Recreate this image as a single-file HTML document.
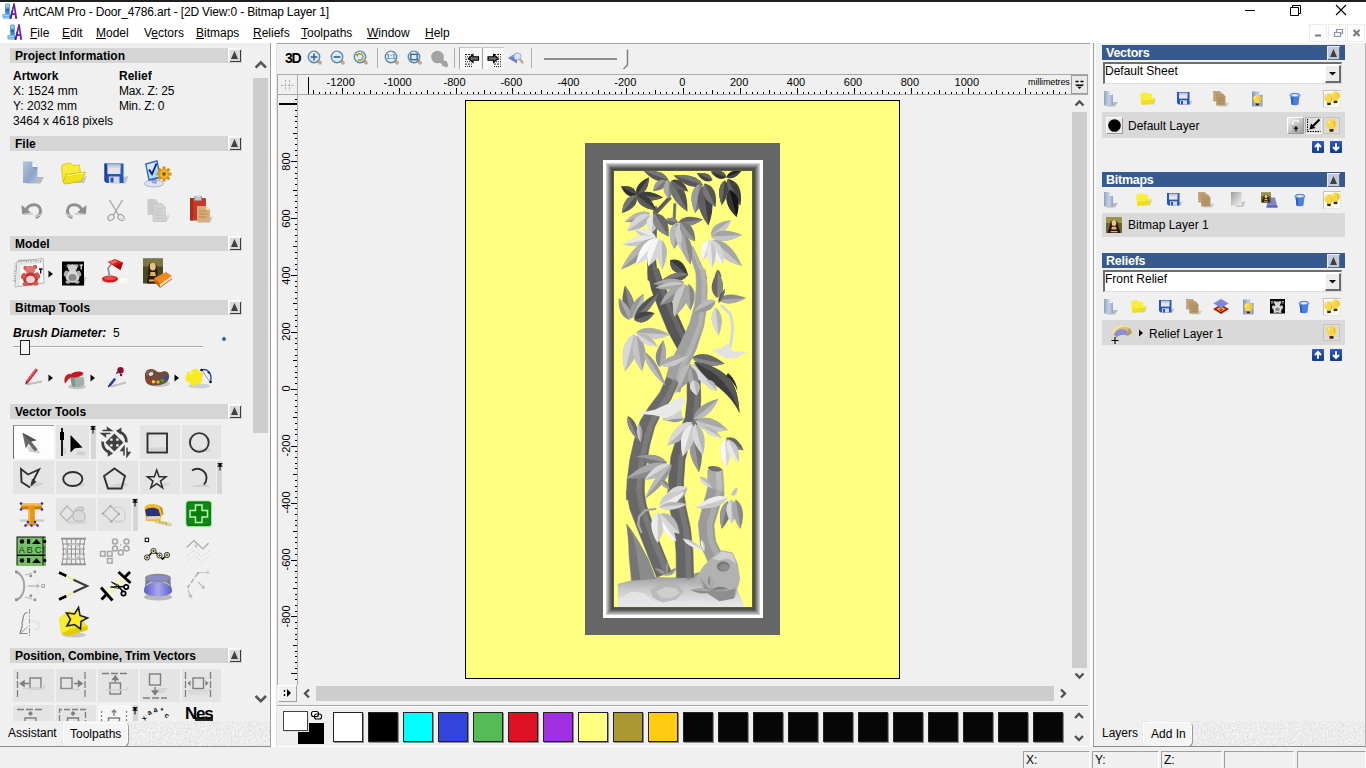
<!DOCTYPE html>
<html lang="en"><head><meta charset="utf-8"><title>ArtCAM Pro - Door_4786.art</title>
<style>
html,body{margin:0;padding:0;}
body{width:1366px;height:768px;overflow:hidden;background:#f0f0f0;position:relative;font-family:"Liberation Sans",sans-serif;}
.t{position:absolute;white-space:pre;line-height:1;}
.r{position:absolute;}
svg{position:absolute;overflow:visible;}
u{text-decoration:underline;text-underline-offset:1px;}
</style></head>
<body>
<div class="r" style="left:0px;top:0px;width:1366px;height:2px;background:#1f1f1f;"></div>
<div class="r" style="left:0px;top:2px;width:1366px;height:41px;background:#ffffff;"></div>
<svg style="left:2px;top:3px" width="16" height="16" viewBox="0 0 16 16"><path d="M3.2 1.6 C3.2 0 7.8 0 7.8 1.6 V11 H3.2 Z" fill="#3f8fd8"/><path d="M3.8 1.8 C4.2 0.8 6.6 0.8 7 1.8 V4.5 H3.8 Z" fill="#8fd0e8"/><rect x="3.6" y="6" width="3.4" height="2.4" fill="#2a66c0"/><path d="M0.3 11.2 H8.2 V15.6 H0.8 Z" fill="#4a9ee0"/><path d="M1.2 12.6 H7 M1.2 14.2 H7" stroke="#d8ecf8" stroke-width=".7"/><path d="M7.6 15.8 L11.6 0.2 H12.8 L15.2 15.8 H13.2 L12.8 12 H10.4 L9.6 15.8 Z" fill="#7a1a9e"/><path d="M10.8 10.2 H12.6 L11.9 4.4 Z" fill="#fff"/><path d="M7.6 15.8 L11.6 0.2 L12 0.2 L9 15.8 Z" fill="#2a2a90"/></svg>
<span class="t" style="left:23px;top:6.00px;font-size:12px;font-weight:400;color:#000;font-style:normal;letter-spacing:-0.15px;">ArtCAM Pro - Door_4786.art - [2D View:0 - Bitmap Layer 1]</span>
<svg style="left:1240px;top:2px" width="126" height="20" viewBox="0 0 126 20"><path d="M5 8.5 H15" stroke="#000" stroke-width="1" fill="none"/><path d="M50.5 5.5 H58.5 V13.5 H50.5 Z M52.5 5.5 V3.5 H60.5 V11.5 H58.5" stroke="#000" stroke-width="1" fill="none"/><path d="M96 3 L106 13 M106 3 L96 13" stroke="#000" stroke-width="1.1" fill="none"/></svg>
<svg style="left:7px;top:24px" width="16" height="16" viewBox="0 0 16 16"><path d="M3.2 1.6 C3.2 0 7.8 0 7.8 1.6 V11 H3.2 Z" fill="#3f8fd8"/><path d="M3.8 1.8 C4.2 0.8 6.6 0.8 7 1.8 V4.5 H3.8 Z" fill="#8fd0e8"/><rect x="3.6" y="6" width="3.4" height="2.4" fill="#2a66c0"/><path d="M0.3 11.2 H8.2 V15.6 H0.8 Z" fill="#4a9ee0"/><path d="M1.2 12.6 H7 M1.2 14.2 H7" stroke="#d8ecf8" stroke-width=".7"/><path d="M7.6 15.8 L11.6 0.2 H12.8 L15.2 15.8 H13.2 L12.8 12 H10.4 L9.6 15.8 Z" fill="#7a1a9e"/><path d="M10.8 10.2 H12.6 L11.9 4.4 Z" fill="#fff"/><path d="M7.6 15.8 L11.6 0.2 L12 0.2 L9 15.8 Z" fill="#2a2a90"/></svg>
<span class="t" style="left:30px;top:27.00px;font-size:12px;font-weight:400;color:#000;font-style:normal;"><u>F</u>ile</span>
<span class="t" style="left:62px;top:27.00px;font-size:12px;font-weight:400;color:#000;font-style:normal;"><u>E</u>dit</span>
<span class="t" style="left:96px;top:27.00px;font-size:12px;font-weight:400;color:#000;font-style:normal;"><u>M</u>odel</span>
<span class="t" style="left:144px;top:27.00px;font-size:12px;font-weight:400;color:#000;font-style:normal;">V<u>e</u>ctors</span>
<span class="t" style="left:196px;top:27.00px;font-size:12px;font-weight:400;color:#000;font-style:normal;"><u>B</u>itmaps</span>
<span class="t" style="left:253px;top:27.00px;font-size:12px;font-weight:400;color:#000;font-style:normal;"><u>R</u>eliefs</span>
<span class="t" style="left:301px;top:27.00px;font-size:12px;font-weight:400;color:#000;font-style:normal;"><u>T</u>oolpaths</span>
<span class="t" style="left:367px;top:27.00px;font-size:12px;font-weight:400;color:#000;font-style:normal;"><u>W</u>indow</span>
<span class="t" style="left:425px;top:27.00px;font-size:12px;font-weight:400;color:#000;font-style:normal;"><u>H</u>elp</span>
<svg style="left:1308px;top:23px" width="58" height="20" viewBox="0 0 58 20"><rect x="1.5" y="1.5" width="17" height="17" fill="#fdfdfd" stroke="#ececec"/><rect x="20.5" y="1.5" width="17" height="17" fill="#fdfdfd" stroke="#ececec"/><rect x="39.5" y="1.5" width="17" height="17" fill="#fdfdfd" stroke="#ececec"/><path d="M7 12.5 H13" stroke="#7a7a7a" stroke-width="2"/><path d="M26.5 9.5 H32.5 V13.5 H26.5 Z M28.5 9 V6.5 H34.5 V10.5 H33" stroke="#8a93a6" stroke-width="1.2" fill="none"/><path d="M45.5 7 L51.5 13 M51.5 7 L45.5 13" stroke="#7a7a7a" stroke-width="2"/></svg>
<div class="r" style="left:0px;top:43px;width:1366px;height:705px;background:#f0f0f0;"></div>
<div class="r" style="left:270px;top:43px;width:1px;height:705px;background:#a0a0a0;"></div>
<div class="r" style="left:271px;top:43px;width:5px;height:705px;background:#ffffff;"></div>
<div class="r" style="left:276px;top:43px;width:1px;height:705px;background:#e3e3e3;"></div>
<div class="r" style="left:1088px;top:43px;width:2px;height:705px;background:#f0f0f0;"></div>
<div class="r" style="left:1090px;top:43px;width:3px;height:705px;background:#fbfbfb;"></div>
<div class="r" style="left:1094px;top:43px;width:2px;height:678px;background:#f8f8f8;"></div>
<div class="r" style="left:1093px;top:43px;width:1px;height:705px;background:#a0a0a0;"></div>
<div class="r" style="left:10px;top:48px;width:232px;height:15px;background:#d5d5d5;"></div>
<span class="t" style="left:15px;top:50.00px;font-size:12px;font-weight:700;color:#000;font-style:normal;">Project Information</span>
<div class="r" style="left:228px;top:48px;width:13px;height:14px;background:#dadada;box-shadow:inset 1px 1px 0 #fff, inset 2px 2px 0 #f2f2f2, inset -1px -1px 0 #3c3c3c;"></div><svg style="left:228px;top:48px" width="13" height="14" viewBox="0 0 13 14"><path d="M6.5 3 L10 11 L3 11 Z" fill="#404040"/></svg>
<div class="r" style="left:10px;top:136px;width:232px;height:15px;background:#d5d5d5;"></div>
<span class="t" style="left:15px;top:138.00px;font-size:12px;font-weight:700;color:#000;font-style:normal;">File</span>
<div class="r" style="left:228px;top:136px;width:13px;height:14px;background:#dadada;box-shadow:inset 1px 1px 0 #fff, inset 2px 2px 0 #f2f2f2, inset -1px -1px 0 #3c3c3c;"></div><svg style="left:228px;top:136px" width="13" height="14" viewBox="0 0 13 14"><path d="M6.5 3 L10 11 L3 11 Z" fill="#404040"/></svg>
<div class="r" style="left:10px;top:236px;width:232px;height:15px;background:#d5d5d5;"></div>
<span class="t" style="left:15px;top:238.00px;font-size:12px;font-weight:700;color:#000;font-style:normal;">Model</span>
<div class="r" style="left:228px;top:236px;width:13px;height:14px;background:#dadada;box-shadow:inset 1px 1px 0 #fff, inset 2px 2px 0 #f2f2f2, inset -1px -1px 0 #3c3c3c;"></div><svg style="left:228px;top:236px" width="13" height="14" viewBox="0 0 13 14"><path d="M6.5 3 L10 11 L3 11 Z" fill="#404040"/></svg>
<div class="r" style="left:10px;top:300px;width:232px;height:15px;background:#d5d5d5;"></div>
<span class="t" style="left:15px;top:302.00px;font-size:12px;font-weight:700;color:#000;font-style:normal;">Bitmap Tools</span>
<div class="r" style="left:228px;top:300px;width:13px;height:14px;background:#dadada;box-shadow:inset 1px 1px 0 #fff, inset 2px 2px 0 #f2f2f2, inset -1px -1px 0 #3c3c3c;"></div><svg style="left:228px;top:300px" width="13" height="14" viewBox="0 0 13 14"><path d="M6.5 3 L10 11 L3 11 Z" fill="#404040"/></svg>
<div class="r" style="left:10px;top:404px;width:232px;height:15px;background:#d5d5d5;"></div>
<span class="t" style="left:15px;top:406.00px;font-size:12px;font-weight:700;color:#000;font-style:normal;">Vector Tools</span>
<div class="r" style="left:228px;top:404px;width:13px;height:14px;background:#dadada;box-shadow:inset 1px 1px 0 #fff, inset 2px 2px 0 #f2f2f2, inset -1px -1px 0 #3c3c3c;"></div><svg style="left:228px;top:404px" width="13" height="14" viewBox="0 0 13 14"><path d="M6.5 3 L10 11 L3 11 Z" fill="#404040"/></svg>
<div class="r" style="left:10px;top:648px;width:232px;height:15px;background:#d5d5d5;"></div>
<span class="t" style="left:15px;top:650.00px;font-size:12px;font-weight:700;color:#000;font-style:normal;letter-spacing:-0.1px;">Position, Combine, Trim Vectors</span>
<div class="r" style="left:228px;top:648px;width:13px;height:14px;background:#dadada;box-shadow:inset 1px 1px 0 #fff, inset 2px 2px 0 #f2f2f2, inset -1px -1px 0 #3c3c3c;"></div><svg style="left:228px;top:648px" width="13" height="14" viewBox="0 0 13 14"><path d="M6.5 3 L10 11 L3 11 Z" fill="#404040"/></svg>
<span class="t" style="left:13px;top:70.00px;font-size:12px;font-weight:700;color:#000;font-style:normal;">Artwork</span>
<span class="t" style="left:119px;top:70.00px;font-size:12px;font-weight:700;color:#000;font-style:normal;">Relief</span>
<span class="t" style="left:13px;top:85.00px;font-size:12px;font-weight:400;color:#000;font-style:normal;">X: 1524 mm</span>
<span class="t" style="left:119px;top:85.00px;font-size:12px;font-weight:400;color:#000;font-style:normal;letter-spacing:-0.15px;">Max. Z: 25</span>
<span class="t" style="left:13px;top:100.00px;font-size:12px;font-weight:400;color:#000;font-style:normal;">Y: 2032 mm</span>
<span class="t" style="left:119px;top:100.00px;font-size:12px;font-weight:400;color:#000;font-style:normal;letter-spacing:-0.15px;">Min. Z: 0</span>
<span class="t" style="left:13px;top:115.00px;font-size:12px;font-weight:400;color:#000;font-style:normal;">3464 x 4618 pixels</span>
<span class="t" style="left:13px;top:327.00px;font-size:12px;font-weight:700;color:#000;font-style:italic;">Brush Diameter:</span>
<span class="t" style="left:113px;top:327.00px;font-size:12px;font-weight:400;color:#000;font-style:normal;">5</span>
<div class="r" style="left:13px;top:346px;width:190px;height:1px;background:#a8a8a8;"></div>
<div class="r" style="left:13px;top:347px;width:190px;height:1px;background:#ffffff;"></div>
<div class="r" style="left:20px;top:340px;width:10px;height:15px;background:#f4f4f4;box-sizing:border-box;border:1px solid #222;"></div>
<svg style="left:221px;top:336px" width="6" height="6" viewBox="0 0 6 6"><path d="M3 0.5 L5.5 3 L3 5.5 L0.5 3 Z" fill="#3d6a8c"/></svg>
<svg style="left:21px;top:160px" width="24" height="26" viewBox="0 0 24 26"><defs><linearGradient id="gdoc" x1="0" y1="0" x2="1" y2="1"><stop offset="0" stop-color="#b9c6dc"/><stop offset=".6" stop-color="#8ea5c6"/><stop offset="1" stop-color="#b6c4dc"/></linearGradient></defs><path d="M15 17 L23 17 L19.5 23.5 H5 Z" fill="#b9b9b9"/><path d="M2 1.5 H11.5 L16.5 7 V23 H2 Z" fill="url(#gdoc)"/><path d="M11.5 1.5 L16.5 7 H11.5 Z" fill="#fff"/><path d="M11.5 7 H16.5 L14.5 9.5 Z" fill="#7d93b5"/></svg>
<svg style="left:60px;top:161px" width="28" height="24" viewBox="0 0 28 24"><path d="M20 19 L27 14.5 L24 22 H8 Z" fill="#c4c4c4"/><path d="M1.5 6 L3 3.5 L10.5 2 L13 4.5 L19.5 4 L20.5 13 L3 21 Z" fill="#f7ec3a" stroke="#d6c400" stroke-width=".8"/><path d="M3 21.5 L6 13.5 L25.5 11 L21.5 20 L6 23 Z" fill="#f2e21c" stroke="#c9b600" stroke-width=".8"/><path d="M6.5 14.5 L24 12" stroke="#fdf68a" stroke-width="1"/></svg>
<svg style="left:103px;top:162px" width="26" height="23" viewBox="0 0 26 23"><path d="M20 15 L25.5 14 L22.5 21.5 H8 Z" fill="#c2c2c2"/><path d="M1.5 1.5 H20.5 V21 H3.5 L1.5 19 Z" fill="#2457bd"/><path d="M1.5 1.5 H3.5 V21 L1.5 19 Z" fill="#163f98"/><rect x="4.5" y="2.5" width="13" height="9.5" fill="#e4e4e8"/><rect x="4.5" y="2.5" width="13" height="3" fill="#c6c8d2"/><rect x="6" y="14.5" width="10.5" height="6.5" fill="#d7d9df"/><rect x="7.5" y="15.5" width="3" height="5" fill="#2457bd"/></svg>
<svg style="left:142px;top:159px" width="31" height="29" viewBox="0 0 31 29"><ellipse cx="12" cy="24.5" rx="9.5" ry="3.4" fill="#dfe3f4" stroke="#9aa4cc" stroke-width=".8"/><path d="M10 19 L15 20 L14.5 25 L9.5 24 Z" fill="#9aa4d8"/><path d="M3 4.5 L15.5 1 L19 19 L6.5 22 Z" fill="#3d5cc0"/><path d="M4.5 5.5 L14.5 2.8 L17.5 17.5 L7.5 20 Z" fill="#a9dcf5"/><path d="M5 6 L14 3.5 L15 9 L6.2 12 Z" fill="#d2eefb"/><path d="M7 10.5 L10 15 L14.5 4.5" stroke="#101880" stroke-width="1.8" fill="none"/><g transform="translate(22,15)"><circle r="5.2" fill="#e8a21c"/><path d="M-1.5 -7.5 H1.5 V7.5 H-1.5 Z M-7.5 -1.5 H7.5 V1.5 H-7.5 Z" fill="#d98f10"/><path d="M-1.5 -7.5 H1.5 V7.5 H-1.5 Z M-7.5 -1.5 H7.5 V1.5 H-7.5 Z" fill="#d98f10" transform="rotate(45)"/><circle r="4.4" fill="#efb02a"/><circle r="1.8" fill="#7a5208"/></g></svg>
<svg style="left:20px;top:200px" width="26" height="22" viewBox="0 0 26 22"><path d="M3 14 H13" stroke="#cfcfcf" stroke-width="2"/><path d="M6 10.5 C8 3 20 2.5 20.5 10.5 C20.7 14 18.5 16.5 15.5 17.5" stroke="#8e8e8e" stroke-width="3" fill="none"/><path d="M1.5 5 L2 14 L11 12.5 Z" fill="#8e8e8e"/><path d="M15 17 L23 13.5" stroke="#cfcfcf" stroke-width="1.5"/></svg>
<svg style="left:62px;top:200px" width="26" height="22" viewBox="0 0 26 22"><path d="M13 14 H23" stroke="#cfcfcf" stroke-width="2"/><path d="M20 10.5 C18 3 6 2.5 5.5 10.5 C5.3 14 7.5 16.5 10.5 17.5" stroke="#8e8e8e" stroke-width="3" fill="none"/><path d="M24.5 5 L24 14 L15 12.5 Z" fill="#8e8e8e"/><path d="M3 13.5 L11 17" stroke="#cfcfcf" stroke-width="1.5"/></svg>
<svg style="left:105px;top:198px" width="22" height="25" viewBox="0 0 22 25"><path d="M4.5 2 L13.5 17 M17.5 2 L8.5 17" stroke="#a2a2a2" stroke-width="1.3" fill="none"/><ellipse cx="6" cy="19.5" rx="3.3" ry="2.6" fill="none" stroke="#a2a2a2" stroke-width="1.2" transform="rotate(-35 6 19.5)"/><ellipse cx="16" cy="19.5" rx="3.3" ry="2.6" fill="none" stroke="#a2a2a2" stroke-width="1.2" transform="rotate(35 16 19.5)"/><path d="M15 20 L21 22" stroke="#d6d6d6" stroke-width="1.5"/></svg>
<svg style="left:146px;top:198px" width="25" height="26" viewBox="0 0 25 26"><path d="M18 18 L24 17 L21 24 H9 Z" fill="#d6d6d6"/><path d="M1.5 1 H9.5 L12 4 V17 H1.5 Z" fill="#cbcbcb"/><path d="M7 5.5 H16 L19.5 9.5 V23.5 H7 Z" fill="#d2d2d2" stroke="#c0c0c0" stroke-width=".6"/><path d="M9 11 H17 M9 14 H17 M9 17 H17 M9 20 H17" stroke="#c6c6c6" stroke-width="1"/></svg>
<svg style="left:188px;top:194px" width="26" height="30" viewBox="0 0 26 30"><path d="M17 24 L25 22.5 L22 29 H9 Z" fill="#cdcdcd"/><rect x="2" y="4" width="16" height="22.5" rx="1" fill="#c8382a"/><rect x="2" y="4" width="3" height="22.5" fill="#a92c20"/><path d="M6.5 2.5 H13.5 V6.5 H6.5 Z" fill="#bfc3c8" stroke="#8d9298" stroke-width=".7"/><rect x="8.2" y="1" width="3.6" height="2.2" fill="#d9dce0"/><path d="M9 12 H18 L22 16 V28 H9 Z" fill="#d9ae7a"/><path d="M18 12 L22 16 H18 Z" fill="#f0d8b4"/><path d="M11 17 H19 M11 20 H19 M11 23 H19" stroke="#b48a58" stroke-width="1"/></svg>
<svg style="left:13px;top:256px" width="34" height="34" viewBox="0 0 34 34"><path d="M6 3 H31 L29 26 L4 30 Z" fill="#d9d9d9"/><path d="M4 5.5 L30 2.5 L31 27 L2 31 Z" fill="#fdfdfd" stroke="#9d9d9d" stroke-width=".8"/><path d="M4.5 6 L30 3 L30.2 7 L8 9.5 L6.5 30 L2.6 30.5 Z" fill="#e6e6e6"/><path d="M6.0 4 V5.6" stroke="#777" stroke-width=".6"/><path d="M8.4 4 V6.5" stroke="#777" stroke-width=".6"/><path d="M10.8 4 V5.6" stroke="#777" stroke-width=".6"/><path d="M13.2 4 V6.5" stroke="#777" stroke-width=".6"/><path d="M15.6 4 V5.6" stroke="#777" stroke-width=".6"/><path d="M18.0 4 V6.5" stroke="#777" stroke-width=".6"/><path d="M20.4 4 V5.6" stroke="#777" stroke-width=".6"/><path d="M22.8 4 V6.5" stroke="#777" stroke-width=".6"/><path d="M25.2 4 V5.6" stroke="#777" stroke-width=".6"/><path d="M27.6 4 V6.5" stroke="#777" stroke-width=".6"/><path d="M2.5 8.0 H3.8" stroke="#777" stroke-width=".6" transform="skewX(-6)"/><path d="M2.5 10.4 H4.6" stroke="#777" stroke-width=".6" transform="skewX(-6)"/><path d="M2.5 12.8 H3.8" stroke="#777" stroke-width=".6" transform="skewX(-6)"/><path d="M2.5 15.2 H4.6" stroke="#777" stroke-width=".6" transform="skewX(-6)"/><path d="M2.5 17.6 H3.8" stroke="#777" stroke-width=".6" transform="skewX(-6)"/><path d="M2.5 20.0 H4.6" stroke="#777" stroke-width=".6" transform="skewX(-6)"/><path d="M2.5 22.4 H3.8" stroke="#777" stroke-width=".6" transform="skewX(-6)"/><path d="M2.5 24.8 H4.6" stroke="#777" stroke-width=".6" transform="skewX(-6)"/><circle cx="12.5" cy="12" r="2.2" fill="#d9534f"/><circle cx="22" cy="11" r="2.2" fill="#d9534f"/><ellipse cx="17.2" cy="14" rx="5" ry="4.2" fill="#e07470"/><ellipse cx="17.5" cy="23" rx="7.6" ry="6.5" fill="#c8322c"/><ellipse cx="17.5" cy="23.5" rx="4.5" ry="3.8" fill="#f3d6d3"/><ellipse cx="10.5" cy="20" rx="2.3" ry="3.4" fill="#d9534f" transform="rotate(25 10.5 20)"/><ellipse cx="24.5" cy="19.5" rx="2.3" ry="3.4" fill="#d9534f" transform="rotate(-25 24.5 19.5)"/><ellipse cx="12.5" cy="28" rx="3" ry="2" fill="#d9534f"/><ellipse cx="22.5" cy="27.5" rx="3" ry="2" fill="#d9534f"/><path d="M26 13 H29.5 M27.7 13 V17.5" stroke="#000" stroke-width="1.3"/></svg>
<svg style="left:48px;top:270px" width="6" height="8" viewBox="0 0 6 8"><path d="M0.5 0.5 L5 4 L0.5 7.5 Z" fill="#000"/></svg>
<svg style="left:61px;top:260px" width="26" height="28" viewBox="0 0 26 28"><path d="M20 18 L25.5 17 L23 26 H8 Z" fill="#c6c6c6"/><rect x="1" y="1.5" width="22" height="24" fill="#050505"/><circle cx="7.5" cy="6" r="2.1" fill="#9a9a9a"/><circle cx="15.5" cy="6" r="2.1" fill="#9a9a9a"/><ellipse cx="11.5" cy="8" rx="4.6" ry="3.8" fill="#cfcfcf"/><ellipse cx="11.5" cy="16.5" rx="7" ry="6.2" fill="#d8d8d8"/><ellipse cx="11.5" cy="17.5" rx="4" ry="3.5" fill="#8a8a8a"/><ellipse cx="5" cy="13.5" rx="2" ry="3" fill="#b0b0b0" transform="rotate(25 5 13.5)"/><ellipse cx="18" cy="13.5" rx="2" ry="3" fill="#b0b0b0" transform="rotate(-25 18 13.5)"/><ellipse cx="7" cy="22" rx="2.6" ry="1.8" fill="#b0b0b0"/><ellipse cx="16" cy="22" rx="2.6" ry="1.8" fill="#b0b0b0"/><path d="M18.5 5 H22 M20.2 5 V9.5" stroke="#fff" stroke-width="1.2"/></svg>
<svg style="left:99px;top:257px" width="32" height="30" viewBox="0 0 32 30"><ellipse cx="22" cy="23.5" rx="8" ry="2.6" fill="#fffdf2"/><ellipse cx="9" cy="24" rx="7" ry="2.2" fill="#d8d8d8"/><ellipse cx="11" cy="22" rx="8" ry="3.4" fill="#d81818"/><ellipse cx="11" cy="21" rx="6" ry="2" fill="#f04a3a"/><path d="M11 21 L9 11.5 L13 6" stroke="#8b8b95" stroke-width="1.6" fill="none"/><path d="M8.5 5 L16 2 L24 5.5 L21.5 13 L15 9 Z" fill="#e01a1a"/><path d="M15 9 L21.5 13 L24 5.5 Z" fill="#a80f0f"/><path d="M10 5 L16 3 L19 4.5 L13.5 7 Z" fill="#f46a5a"/></svg>
<svg style="left:142px;top:257px" width="31" height="32" viewBox="0 0 31 32"><rect x="1" y="1.5" width="20" height="25" fill="#4c4822"/><rect x="1" y="1.5" width="20" height="8" fill="#7c7642"/><path d="M5 26.5 C5 17 8 15 11 15 C14 15 17 17 17 26.5 Z" fill="#2a1d10"/><path d="M6.5 11 C6 3.5 15.5 3.5 15 11 L16 17 H5.5 Z" fill="#2b1c0e"/><ellipse cx="10.8" cy="9.5" rx="3" ry="4" fill="#e9bf7e"/><path d="M8.5 15 H13 L14 19 H8 Z" fill="#dcb070"/><path d="M7 22.5 H15 V24.5 H7 Z" fill="#d9a868"/><path d="M12 21 L24 15 L30 19 L18 27.5 Z" fill="#f08a1c"/><path d="M12 21 L18 27.5 L18 31 L12 24.5 Z" fill="#c9650c"/><path d="M18 27.5 L30 19 V22 L18 31 Z" fill="#f6e2c2"/><path d="M18 30.5 L30 21.8" stroke="#c9650c" stroke-width="1"/></svg>
<svg style="left:23px;top:366px" width="22" height="22" viewBox="0 0 22 22"><path d="M3.5 18.5 L19 15.5" stroke="#bdbdbd" stroke-width="2"/><path d="M12.5 2.5 L15 4 L5.5 16.5 L2.5 18.5 L3 15 Z" fill="#d4202c"/><path d="M12.5 2.5 L13.8 3.3 L4 16 L3 15 Z" fill="#f0606a"/><path d="M2.5 18.5 L3 15 L5.5 16.5 Z" fill="#5a3a3a"/></svg>
<svg style="left:48px;top:374px" width="6" height="8" viewBox="0 0 6 8"><path d="M0.5 0.5 L5 4 L0.5 7.5 Z" fill="#000"/></svg>
<svg style="left:62px;top:368px" width="26" height="22" viewBox="0 0 26 22"><ellipse cx="15" cy="18.5" rx="9" ry="2.8" fill="#c4c4c4"/><path d="M8 8 L21 5 L22.5 16 C19 19.5 13 20 10 18 Z" fill="#9fb0aa"/><path d="M8 8 L12 7.2 L13.5 18.8 C12 18.8 11 18.5 10 18 Z" fill="#7f928c"/><ellipse cx="14.5" cy="6.5" rx="6.8" ry="2.7" fill="#c8141c" transform="rotate(-12 14.5 6.5)"/><path d="M8.5 5.5 C3 6 1.5 11 3 15.5 C5 14 5.5 11 8.5 10 Z" fill="#d01820"/><path d="M18 9 C23 7 24.5 11 22.5 14.5" stroke="#e3e8e6" stroke-width="1.2" fill="none"/></svg>
<svg style="left:90px;top:374px" width="6" height="8" viewBox="0 0 6 8"><path d="M0.5 0.5 L5 4 L0.5 7.5 Z" fill="#000"/></svg>
<svg style="left:105px;top:366px" width="26" height="24" viewBox="0 0 26 24"><path d="M6 20.5 L21 16.5" stroke="#c2c2c2" stroke-width="2.2"/><circle cx="15.5" cy="4.2" r="3.2" fill="#8a1230"/><path d="M11.5 6.5 L17 9.5" stroke="#5a0c20" stroke-width="2.2"/><path d="M13.5 8.5 L5.5 18.5" stroke="#dfe6f6" stroke-width="3.2" stroke-linecap="round"/><path d="M9.5 13.5 L4.8 19.3" stroke="#2a3cae" stroke-width="2.6" stroke-linecap="round"/><path d="M4.6 19.5 L3.2 21.2" stroke="#222" stroke-width="1.2"/></svg>
<svg style="left:142px;top:367px" width="30" height="22" viewBox="0 0 30 22"><ellipse cx="17" cy="16.5" rx="11" ry="3.5" fill="#c9c9c9"/><path d="M3 8 C3 2 10 0.5 13.5 3.5 C15.5 5.5 18 5.5 21 4.5 C26 3 28.5 8 26.5 12.5 C24 18 14 19.5 8 18 C4 17 2.5 13 3 8 Z" fill="#6e4b3c"/><path d="M4.5 8 C4.5 4 9 2.5 12 4.5" stroke="#8d6a5a" stroke-width="1.2" fill="none"/><ellipse cx="9" cy="7" rx="2.4" ry="1.8" fill="#ddd" transform="rotate(-20 9 7)"/><circle cx="7" cy="13" r="1.8" fill="#e02020"/><circle cx="11.5" cy="14.8" r="1.8" fill="#f0d820"/><circle cx="16" cy="15" r="1.8" fill="#f0a020"/><circle cx="20.3" cy="13.6" r="1.8" fill="#28a838"/><circle cx="23.8" cy="10.8" r="1.8" fill="#2848d0"/></svg>
<svg style="left:174px;top:374px" width="6" height="8" viewBox="0 0 6 8"><path d="M0.5 0.5 L5 4 L0.5 7.5 Z" fill="#000"/></svg>
<svg style="left:184px;top:366px" width="32" height="24" viewBox="0 0 32 24"><ellipse cx="15" cy="20" rx="11" ry="2.6" fill="#cfcfd6"/><path d="M17.5 4 C24 2 28.5 8 26.5 16" stroke="#2a44a8" stroke-width="1.4" fill="none"/><path d="M18 4.5 L26.5 16.5" stroke="#8a96c8" stroke-width="1"/><circle cx="17.5" cy="4" r="1.3" fill="#111"/><circle cx="26.5" cy="16" r="1.3" fill="#111"/><circle cx="24.5" cy="6.5" r="1" fill="#111"/><path d="M2.5 9 C2.5 5 6 5 7 6 C8 1.5 15 1.5 15.5 6 C19 5.5 20.5 9.5 17.5 11.5 C20 14 17.5 18.5 14 17 C12 21 6 20.5 6 16.5 C2 16.5 0.5 12 2.5 9 Z" fill="#f6ea22"/><path d="M5 8.5 C6 6.5 8 6.5 9 7.5" stroke="#fbf58a" stroke-width="1.2" fill="none"/></svg>
<div class="r" style="left:13px;top:425px;width:41px;height:34px;background:#fdfdfd;box-sizing:border-box;border-left:1px solid #6d6d6d;border-top:1px solid #9a9a9a;"></div>
<svg style="left:19px;top:430px" width="27" height="27" viewBox="0 0 24 24"><path d="M7 14 L17 17.5 L19 21 L9 19 Z" fill="#d0d0d0"/><path d="M3 2.5 L15.5 9 L10.8 10.3 L16.5 17 L14 19 L8.5 12.2 L6 16.5 Z" fill="#6a6a6a"/><path d="M3 2.5 L15.5 9 L10.8 10.3 L9 9.5 Z" fill="#4f4f4f"/></svg>
<div class="r" style="left:56px;top:425px;width:33px;height:34px;background:#e4e4e4;"></div>
<svg style="left:58px;top:427px" width="30" height="31" viewBox="0 0 30 31"><path d="M20 24 L28 25.5 L26 28.5 L18 27.5 Z" fill="#cfcfcf"/><path d="M5 20 L8 27" stroke="#d2d2d2" stroke-width="2.5"/><path d="M4 1 V29" stroke="#000" stroke-width="1.8"/><rect x="2" y="5" width="4" height="8" fill="#000"/><path d="M12.5 8 V25.5 L16.8 21.3 L24.5 20.6 Z" fill="#000"/></svg>
<div class="r" style="left:91px;top:425px;width:5px;height:34px;background:#d6d6d6;"></div>
<svg style="left:90px;top:426px" width="6" height="8" viewBox="0 0 6 8"><path d="M0.5 0.7 H5.5 M0.5 3.2 H5.5 M3 3.2 V7.5" stroke="#000" stroke-width="1" fill="none"/><rect x="1.6" y="0.7" width="2.8" height="2.5" fill="#000"/></svg>
<svg style="left:99px;top:426px" width="32" height="32" viewBox="0 0 32 32"><path d="M15.4 7.4 L24.4 16.4 L15.4 25.4 L6.4 16.4 Z" fill="#404040"/><path d="M11.2 12.4 H13.6 V14.8 H11.2 Z M17.2 12.4 H19.6 V14.8 H17.2 Z M11.2 18.2 H13.6 V20.6 H11.2 Z M17.2 18.2 H19.6 V20.6 H17.2 Z" fill="#f4f4f4"/><path d="M20.5 5.8 C25 7.5 27.6 11.5 27.4 16.4" fill="none" stroke="#404040" stroke-width="2.8"/><path d="M17 4.8 L22.6 1.6 L22 8.8 Z" fill="#404040"/><path d="M3.6 15.6 C3.4 20.5 6 24.5 10.5 26.4" fill="none" stroke="#404040" stroke-width="2.8"/><path d="M14 27.4 L8.6 30.8 L9 23.4 Z" fill="#404040"/><path d="M3.5 4.6 H11.5 M8.5 1.8 L12.3 4.6 H8.5 Z" stroke="#404040" stroke-width="1.5" fill="#404040"/><path d="M11.5 7.6 H3.5 M6.5 10.4 L2.7 7.6 H6.5 Z" stroke="#404040" stroke-width="1.5" fill="#404040"/><path d="M25 21.5 V29.5 M22.2 24.5 L25 20.7 V24.5 Z" stroke="#404040" stroke-width="1.5" fill="#404040"/><path d="M28 29.5 V21.5 M30.8 26.5 L28 30.3 V26.5 Z" stroke="#404040" stroke-width="1.5" fill="#404040"/></svg>
<div class="r" style="left:140px;top:425px;width:40px;height:34px;background:#e4e4e4;"></div>
<svg style="left:144px;top:430px" width="28" height="26" viewBox="0 0 28 26"><path d="M5 18 L20 17 L24 19 L22 21 H6 Z" fill="#d2d2d2"/><rect x="3.5" y="3.5" width="19.5" height="19" fill="none" stroke="#303030" stroke-width="1.9"/></svg>
<div class="r" style="left:182px;top:425px;width:39px;height:34px;background:#e4e4e4;"></div>
<svg style="left:187px;top:430px" width="28" height="26" viewBox="0 0 28 26"><path d="M8 20 L20 18 L24 19.5 L22 22 H9 Z" fill="#d2d2d2"/><circle cx="12.3" cy="12.5" r="9.4" fill="none" stroke="#303030" stroke-width="1.9"/></svg>
<div class="r" style="left:13px;top:461px;width:41px;height:33px;background:#e4e4e4;"></div>
<div class="r" style="left:56px;top:461px;width:40px;height:33px;background:#e4e4e4;"></div>
<div class="r" style="left:98px;top:461px;width:40px;height:33px;background:#e4e4e4;"></div>
<div class="r" style="left:140px;top:461px;width:40px;height:33px;background:#e4e4e4;"></div>
<div class="r" style="left:182px;top:461px;width:34px;height:33px;background:#e4e4e4;"></div>
<div class="r" style="left:217px;top:461px;width:5px;height:33px;background:#d6d6d6;"></div>
<svg style="left:217px;top:463px" width="6" height="8" viewBox="0 0 6 8"><path d="M0.5 0.7 H5.5 M0.5 3.2 H5.5 M3 3.2 V7.5" stroke="#000" stroke-width="1" fill="none"/><rect x="1.6" y="0.7" width="2.8" height="2.5" fill="#000"/></svg>
<svg style="left:17px;top:465px" width="30" height="28" viewBox="0 0 30 28"><path d="M6 20 L22 17 L27 18.5 L20 21.5 Z" fill="#d0d0d0"/><path d="M13 22.5 L4.5 17 L4 4 L11 9.5 L22 4.5 L14.5 19" stroke="#303030" stroke-width="1.9" fill="none" stroke-linejoin="miter"/><path d="M13.5 22 L15 14 L19.5 16.5 Z" fill="#333"/></svg>
<svg style="left:60px;top:466px" width="28" height="26" viewBox="0 0 28 26"><path d="M10 19 L22 17 L25 18.5 L23 20.5 H11 Z" fill="#d2d2d2"/><ellipse cx="12.8" cy="13" rx="9.6" ry="7" fill="none" stroke="#303030" stroke-width="1.9"/></svg>
<svg style="left:101px;top:465px" width="30" height="28" viewBox="0 0 30 28"><path d="M10 20 L24 18 L27 19.5 L25 21.5 H11 Z" fill="#d2d2d2"/><path d="M13.5 3.5 L24 11 L20.5 23.5 H7 L3 11 Z" fill="none" stroke="#303030" stroke-width="1.9"/></svg>
<svg style="left:144px;top:465px" width="30" height="28" viewBox="0 0 30 28"><path d="M8 20 L24 17.5 L27 19 L22 21 Z" fill="#d6d6d6"/><path d="M12.5 3 L15.3 11 H23.5 L17 16 L19.5 24 L12.5 19 L5.5 24 L8 16 L1.5 11 H9.7 Z" fill="none" stroke="#2c2c2c" stroke-width="1.8" transform="translate(2.2,2.6) scale(0.84)"/></svg>
<svg style="left:186px;top:466px" width="30" height="26" viewBox="0 0 30 26"><path d="M6 19.5 L18 18 L22 19 L24 22 L20 21 H8 Z" fill="#d0d0d0"/><path d="M6 4.5 C12 0.5 20.5 4.5 20.5 12 C20.5 14.5 19.5 17 18 18.5" fill="none" stroke="#303030" stroke-width="1.9"/></svg>
<svg style="left:18px;top:501px" width="28" height="27" viewBox="0 0 28 27"><path d="M2 19.5 H26" stroke="#c9c9c9" stroke-width="2.2"/><path d="M3 2.5 H24 V8.5 H16.8 V22.5 H19.5 V24.5 H7.5 V22.5 H10.2 V8.5 H3 Z" fill="#e8961a"/><path d="M3 2.5 H24 V4.5 H3 Z M10.2 8.5 H12 V22.5 H10.2 Z" fill="#f6bc58"/><path d="M3 7 H10.2 M16.8 7 H24" stroke="#b86e08" stroke-width="1.6"/><circle cx="3" cy="2.5" r="1.3" fill="#2a2ab0"/><circle cx="24" cy="2.5" r="1.3" fill="#2a2ab0"/><circle cx="3" cy="8.5" r="1.3" fill="#2a2ab0"/><circle cx="24" cy="8.5" r="1.3" fill="#2a2ab0"/><circle cx="7.5" cy="24.5" r="1.3" fill="#2a2ab0"/><circle cx="19.5" cy="24.5" r="1.3" fill="#2a2ab0"/><circle cx="13.5" cy="24.5" r="1.3" fill="#2a2ab0"/><circle cx="10" cy="21" r="1.3" fill="#2a2ab0"/><circle cx="17" cy="21" r="1.3" fill="#2a2ab0"/></svg>
<div class="r" style="left:56px;top:498px;width:40px;height:33px;background:#e4e4e4;"></div>
<div class="r" style="left:98px;top:498px;width:33px;height:33px;background:#e4e4e4;"></div>
<div class="r" style="left:133px;top:498px;width:5px;height:33px;background:#d6d6d6;"></div>
<svg style="left:132px;top:499px" width="6" height="8" viewBox="0 0 6 8"><path d="M0.5 0.7 H5.5 M0.5 3.2 H5.5 M3 3.2 V7.5" stroke="#000" stroke-width="1" fill="none"/><rect x="1.6" y="0.7" width="2.8" height="2.5" fill="#000"/></svg>
<svg style="left:58px;top:502px" width="34" height="26" viewBox="0 0 34 26"><path d="M8 19 L26 18 L30 20 L26 22 H10 Z" fill="#d6d6d6"/><path d="M2 12 L9 4 L16 11 L9 19 Z" fill="none" stroke="#b4b4b4" stroke-width="1.2"/><ellipse cx="21" cy="8.5" rx="5" ry="3" fill="#d0d0d0" stroke="#b4b4b4" stroke-width="1" transform="rotate(-30 21 8.5)"/><path d="M15 12 C17 7 25 7 27 13 V17 C24 20 18 20 15 17 Z" fill="#dadada" stroke="#b4b4b4" stroke-width="1"/></svg>
<svg style="left:100px;top:502px" width="30" height="26" viewBox="0 0 30 26"><path d="M6 20 L22 19 L26 21 H10 Z" fill="#dadada"/><path d="M3 11.5 L10.5 4 L19 12 L11.5 19.5 Z" fill="none" stroke="#b4b4b4" stroke-width="1.2"/><path d="M14 6 C20 3 25 7 25 12 V17 C22 20 17 20 14 18" fill="none" stroke="#cdcdcd" stroke-width="1"/><circle cx="3" cy="11.5" r="1" fill="#9a9a9a"/><circle cx="10.5" cy="4" r="1" fill="#9a9a9a"/><circle cx="19" cy="12" r="1" fill="#9a9a9a"/><circle cx="11.5" cy="19.5" r="1" fill="#9a9a9a"/></svg>
<svg style="left:142px;top:502px" width="32" height="26" viewBox="0 0 32 26"><path d="M14 18 L30 21.5 L29 24.5 L13 21 Z" fill="#c8c8c8"/><path d="M12 17 L28 20.5 L27.5 23 L12 20 Z" fill="#f4dc6a"/><path d="M2.5 5.5 C4 1.5 12 1 17 3.5 L20 13 L18 19.5 L4 19 Z" fill="#f0bc2c"/><path d="M3 8 C6 5 13 5 16.5 7.5 L18.5 14 L4.5 14.5 Z" fill="#2c3278"/><path d="M4.5 14.5 L18.5 14 L18 17 L5 17.5 Z" fill="#d8d4c8"/><path d="M17 3.5 L20.5 6 L21.5 13 L20 13 Z" fill="#c8901c"/><path d="M24 20.5 V22.5 M21 20 V21.6 M18 19.4 V21" stroke="#555" stroke-width=".7"/></svg>
<svg style="left:185px;top:500px" width="28" height="28" viewBox="0 0 28 28"><rect x="1" y="1" width="25.5" height="25.5" rx="2.5" fill="#0f8a12" stroke="#9be89b" stroke-width="1"/><rect x="2.2" y="2.2" width="23" height="23" rx="2" fill="none" stroke="#0a6a0c" stroke-width=".8"/><path d="M10.5 5 H17 V10.5 H22.5 V17 H17 V22.5 H10.5 V17 H5 V10.5 H10.5 Z" fill="#0c7c0e" stroke="#b8f6b8" stroke-width="1.5"/></svg>
<svg style="left:16px;top:536px" width="30" height="30" viewBox="0 0 30 30"><rect x="0.5" y="0.5" width="29" height="29" fill="#0c0c0c"/><rect x="1.5" y="1.5" width="25" height="17" fill="#78c068"/><rect x="27.5" y="1.5" width="2" height="17" fill="#78c068"/><rect x="1.5" y="20" width="25" height="10" fill="#78c068"/><rect x="27.5" y="20" width="2" height="10" fill="#78c068"/><circle cx="6" cy="5.5" r="2.3" fill="#0c0c0c"/><rect x="11" y="3.2" width="3.2" height="4.6" fill="#0c0c0c"/><path d="M16 8 L20.5 3 L25 8 Z" fill="#0c0c0c"/><circle cx="6" cy="24.5" r="2.3" fill="#0c0c0c"/><rect x="11" y="22.2" width="3.2" height="4.6" fill="#0c0c0c"/><path d="M16 27 L20.5 22 L25 27 Z" fill="#0c0c0c"/><text x="2.5" y="17.3" font-family="Liberation Sans, sans-serif" font-size="9.5" fill="#104010" textLength="23">ABC</text><rect x="27.5" y="10" width="1" height="7" fill="#104010"/><circle cx="28.6" cy="5.5" r="1.8" fill="#0c0c0c"/><circle cx="28.6" cy="24.5" r="1.8" fill="#0c0c0c"/></svg>
<svg style="left:59px;top:537px" width="29" height="29" viewBox="0 0 29 29"><path d="M3.0 2 C5.0 10 5.0 18 3.0 27" fill="none" stroke="#909090" stroke-width="1"/><path d="M7.6 2 C8.8 10 8.8 18 7.6 27" fill="none" stroke="#909090" stroke-width="1"/><path d="M12.2 2 C12.6 10 12.6 18 12.2 27" fill="none" stroke="#909090" stroke-width="1"/><path d="M16.8 2 C16.4 10 16.4 18 16.8 27" fill="none" stroke="#909090" stroke-width="1"/><path d="M21.4 2 C20.2 10 20.2 18 21.4 27" fill="none" stroke="#909090" stroke-width="1"/><path d="M26.0 2 C24.0 10 24.0 18 26.0 27" fill="none" stroke="#909090" stroke-width="1"/><path d="M3.0 2.0 H26" fill="none" stroke="#909090" stroke-width="1"/><path d="M3.0 7.0 H26" fill="none" stroke="#909090" stroke-width="1"/><path d="M3.0 12.0 H26" fill="none" stroke="#909090" stroke-width="1"/><path d="M3.0 17.0 H26" fill="none" stroke="#909090" stroke-width="1"/><path d="M3.0 22.0 H26" fill="none" stroke="#909090" stroke-width="1"/><path d="M3.0 27.0 H26" fill="none" stroke="#909090" stroke-width="1"/><path d="M2 1.5 H27 M2 27.5 H27" stroke="#909090" stroke-width="1.4"/><circle cx="14.5" cy="14.5" r="7.5" fill="none" stroke="#c2c2c2" stroke-width="1.6"/></svg>
<svg style="left:99px;top:537px" width="32" height="29" viewBox="0 0 32 29"><rect x="1.5" y="14.5" width="4.6" height="4.6" fill="none" stroke="#a6a6a6" stroke-width="1.5"/><rect x="8.5" y="14.5" width="4.6" height="4.6" fill="none" stroke="#a6a6a6" stroke-width="1.5"/><rect x="8.5" y="21.5" width="4.6" height="4.6" fill="none" stroke="#a6a6a6" stroke-width="1.5"/><circle cx="16" cy="4.5" r="2.5" fill="none" stroke="#a6a6a6" stroke-width="1.5"/><circle cx="27.5" cy="4.5" r="2.5" fill="none" stroke="#a6a6a6" stroke-width="1.5"/><circle cx="16" cy="11.5" r="2.5" fill="none" stroke="#a6a6a6" stroke-width="1.5"/><circle cx="27.5" cy="11.5" r="2.5" fill="none" stroke="#a6a6a6" stroke-width="1.5"/><circle cx="21.8" cy="15.5" r="2.5" fill="none" stroke="#a6a6a6" stroke-width="1.5"/><circle cx="21.8" cy="8" r=".8" fill="#a6a6a6"/></svg>
<svg style="left:143px;top:537px" width="30" height="28" viewBox="0 0 30 28"><rect x="2.2" y="1.2" width="3.4" height="3.4" fill="#fff" stroke="#000" stroke-width="1"/><path d="M4 20.5 L10.5 14 L16.5 18.5 L19.5 22 L24 18" fill="none" stroke="#111" stroke-width="1.6"/><circle cx="4" cy="20.5" r="2.6" fill="#f7f7b0" stroke="#222" stroke-width=".9"/><path d="M2.7 20.5 H5.3 M4 19.2 V21.8" stroke="#222" stroke-width=".8"/><circle cx="10.5" cy="14" r="2.6" fill="#f7f7b0" stroke="#222" stroke-width=".9"/><path d="M9.2 14 H11.8 M10.5 12.7 V15.3" stroke="#222" stroke-width=".8"/><circle cx="16.5" cy="18.5" r="2.6" fill="#f7f7b0" stroke="#222" stroke-width=".9"/><path d="M15.2 18.5 H17.8 M16.5 17.2 V19.8" stroke="#222" stroke-width=".8"/><circle cx="24" cy="18" r="2.6" fill="#f7f7b0" stroke="#222" stroke-width=".9"/><path d="M22.7 18 H25.3 M24 16.7 V19.3" stroke="#222" stroke-width=".8"/></svg>
<svg style="left:185px;top:538px" width="28" height="27" viewBox="0 0 28 27"><path d="M1.5 9.5 L9 2.5 L18 11 L23.5 5" fill="none" stroke="#a8a8a8" stroke-width="1.2"/><path d="M11 4 V9 M9.8 7.5 L11 9.3 L12.2 7.5" fill="none" stroke="#b4b4b4" stroke-width=".9"/><path d="M2 18 L9 12.5 L17 19 L24 13" fill="none" stroke="#d0d0d0" stroke-width="1" stroke-dasharray="1.5 1.5"/><path d="M2 23 L9 17.5 L17 24 L24 18" fill="none" stroke="#d8d8d8" stroke-width="1" stroke-dasharray="1.5 1.5"/></svg>
<svg style="left:15px;top:570px" width="32" height="32" viewBox="0 0 32 32"><path d="M1 2 C12 5 12 27 1 30" fill="none" stroke="#a4a4a4" stroke-width="2"/><path d="M19.5 2 C26 9 26 23 19.5 30" fill="none" stroke="#e0e0e0" stroke-width="1" stroke-dasharray="2 1.5"/><path d="M13 16 H24 M21.5 14 L24 16 L21.5 18" fill="none" stroke="#a4a4a4" stroke-width="1"/><path d="M10 5 L17 3 M10 27 L17 29" stroke="#b6b6b6" stroke-width="1"/><rect x="0" y="0.5" width="2.6" height="2.6" fill="#8e8e8e"/><rect x="0" y="28.5" width="2.6" height="2.6" fill="#8e8e8e"/><rect x="18.5" y="0.5" width="2.6" height="2.6" fill="#8e8e8e"/><rect x="18.5" y="28.5" width="2.6" height="2.6" fill="#8e8e8e"/><rect x="14.5" y="4.5" width="2.6" height="2.6" fill="#8e8e8e"/><rect x="14.5" y="24.5" width="2.6" height="2.6" fill="#8e8e8e"/><rect x="26.8" y="14.7" width="2.6" height="2.6" fill="none" stroke="#8e8e8e" stroke-width=".8"/></svg>
<svg style="left:57px;top:570px" width="32" height="32" viewBox="0 0 32 32"><path d="M2 2.5 L9.5 6 M2 29.5 L9.5 26" stroke="#000" stroke-width="2.6"/><path d="M9.5 6 L17 10 M9.5 26 L17 22" stroke="#f4f4b4" stroke-width="3"/><path d="M9.5 6 L17 10 M9.5 26 L17 22" stroke="#b8b860" stroke-width=".8" stroke-dasharray="1 1.2"/><path d="M16.5 9.7 L30 16 L16.5 22.3" fill="none" stroke="#3c3c3c" stroke-width="2.2" stroke-linejoin="miter"/></svg>
<svg style="left:99px;top:569px" width="33" height="34" viewBox="0 0 33 34"><path d="M8 25.5 L26 8" stroke="#f6f6b8" stroke-width="4.5"/><path d="M2 18.5 L13.5 31.5" stroke="#000" stroke-width="2.8"/><path d="M7.8 25 L2.5 30.5" stroke="#000" stroke-width="2.8"/><path d="M19.5 3 L31.5 14" stroke="#000" stroke-width="2.8"/><path d="M25.5 8.5 L31 3" stroke="#000" stroke-width="2.8"/><path d="M12.5 13 L20 16.5 L19.3 18 Z M11.5 18 L20 17.3 L20 19.3 Z" fill="#fff" stroke="#000" stroke-width=".9"/><path d="M19 17 L24 22.5 M19.5 18 L25 17.5" stroke="#000" stroke-width="1.5"/><circle cx="27.2" cy="18" r="2.2" fill="#f4f4f4" stroke="#000" stroke-width="1.7"/><circle cx="24.5" cy="24.5" r="2.2" fill="#f4f4f4" stroke="#000" stroke-width="1.7"/></svg>
<svg style="left:142px;top:572px" width="32" height="30" viewBox="0 0 32 30"><defs><linearGradient id="gcup" x1="0" x2="1"><stop offset="0" stop-color="#5a5ac8"/><stop offset=".5" stop-color="#a8a8f0"/><stop offset="1" stop-color="#5c5cc8"/></linearGradient></defs><ellipse cx="16" cy="25" rx="14" ry="3.6" fill="#b9b9b9"/><path d="M4 6 C4 12 2 16 2 19 C2 26 30 26 30 19 C30 16 28 12 28 6 Z" fill="url(#gcup)"/><path d="M3 14 C9 10 13 8 16 8 C19 8 23 10 29 14" fill="none" stroke="#d2d890" stroke-width="1.2"/><ellipse cx="16" cy="6" rx="12" ry="3.4" fill="#8a8ad0" stroke="#8c8c8c" stroke-width="1.6"/><path d="M4 6 V14 M28 6 V14" stroke="#8c8c8c" stroke-width="1.2"/></svg>
<svg style="left:185px;top:570px" width="30" height="32" viewBox="0 0 30 32"><path d="M13 3 C8 10 5 14 2.5 18" fill="none" stroke="#b2b2b2" stroke-width="1.6" stroke-dasharray="5 2"/><path d="M14 2.5 H24 M21.8 1 L24.2 2.5 L21.8 4" fill="none" stroke="#c8c8c8" stroke-width="1"/><path d="M13 12 L19 18 M16.5 17.8 L19.3 18.3 L18.8 15.4" fill="none" stroke="#bcbcbc" stroke-width="1.1"/><path d="M3 20 L6 27 M3.6 25.5 L6.2 27.3 L7 24.4" fill="none" stroke="#b8b8b8" stroke-width="1.1"/><circle cx="13" cy="3" r="1.2" fill="#aaa"/></svg>
<svg style="left:18px;top:608px" width="26" height="30" viewBox="0 0 26 30"><path d="M11.5 1 V29" stroke="#9a9a9a" stroke-width="1" stroke-dasharray="5 1.5 1.5 1.5"/><path d="M9.5 4.5 C4 5 5.5 11 4.5 13.5 C3 15.5 5.5 17.5 3.5 20 L2 25.5 H9.5" fill="none" stroke="#8a8a8a" stroke-width="1.2"/><path d="M2 25.5 L9.5 19" stroke="#9a9a9a" stroke-width="1"/><path d="M14 13 C19 12 22 15 20.5 19.5 C19.5 21.5 17.5 22 16.5 21.5" fill="none" stroke="#dcdcdc" stroke-width="1.2"/></svg>
<svg style="left:57px;top:606px" width="33" height="33" viewBox="0 0 33 33"><ellipse cx="17" cy="29" rx="12" ry="2.4" fill="#c8c8c8"/><path d="M2 12 L12 4.5 L20 8 L30.5 20 L30.5 24 L12 30 L4 27.5 Z" fill="#f4e614"/><path d="M4 27.5 L12 23.5 L30.5 20 L30.5 24 L12 30 Z" fill="#e2cc08"/><path d="M2 12 L12 4.5 L14 14 L12 23.5 L4 27.5 Z" fill="#f8ee3a"/><path d="M21.5 1.5 L23 9.5 L30.5 12 L24 15.5 L23.5 23 L17.5 18.5 L10 20 L13.5 13.5 L9.5 7 L17.5 8 Z" fill="#f8ec28" stroke="#1c1c1c" stroke-width="1.6" stroke-linejoin="miter"/></svg>
<div class="r" style="left:13px;top:669px;width:41px;height:33px;background:#e4e4e4;"></div>
<div class="r" style="left:56px;top:669px;width:40px;height:33px;background:#e4e4e4;"></div>
<div class="r" style="left:98px;top:669px;width:40px;height:33px;background:#e4e4e4;"></div>
<div class="r" style="left:140px;top:669px;width:40px;height:33px;background:#e4e4e4;"></div>
<div class="r" style="left:182px;top:669px;width:39px;height:33px;background:#e4e4e4;"></div>
<svg style="left:13px;top:669px" width="41" height="33" viewBox="0 0 41 33"><path d="M4.5 3 V30" stroke="#7e7e7e" stroke-width="1.3" stroke-dasharray="7 2"/><rect x="17" y="9" width="11" height="10.5" fill="none" stroke="#7e7e7e" stroke-width="1.4"/><path d="M16 14.5 H9 M11 12 L7.5 14.5 L11 17 Z" stroke="#7e7e7e" stroke-width="1.5" fill="#7e7e7e"/><path d="M10 19.5 H30 L32 17 H28" stroke="#d2d2d2" stroke-width="1.4" fill="none"/></svg>
<svg style="left:56px;top:669px" width="40" height="33" viewBox="0 0 40 33"><path d="M29 3 V30" stroke="#7e7e7e" stroke-width="1.3" stroke-dasharray="7 2"/><rect x="5" y="9" width="11" height="10.5" fill="none" stroke="#7e7e7e" stroke-width="1.4"/><path d="M18 14.5 H24 M22.5 12 L26 14.5 L22.5 17 Z" stroke="#7e7e7e" stroke-width="1.5" fill="#7e7e7e"/><path d="M6 20.5 H24" stroke="#d2d2d2" stroke-width="1.4" fill="none"/></svg>
<svg style="left:98px;top:669px" width="40" height="33" viewBox="0 0 40 33"><path d="M4 4.5 H30" stroke="#7e7e7e" stroke-width="1.3" stroke-dasharray="7 2"/><rect x="12" y="14" width="10.5" height="11" fill="none" stroke="#7e7e7e" stroke-width="1.4"/><path d="M17.3 13 V9 M14.8 10.5 L17.3 7 L19.8 10.5 Z" stroke="#7e7e7e" stroke-width="1.5" fill="#7e7e7e"/><path d="M8 21 H28 L30 18.5" stroke="#d2d2d2" stroke-width="1.4" fill="none"/></svg>
<svg style="left:140px;top:669px" width="40" height="33" viewBox="0 0 40 33"><path d="M3 29 H27" stroke="#7e7e7e" stroke-width="1.3" stroke-dasharray="7 2"/><path d="M12 24 H24 L28 19 H18 Z" fill="#d4d4d4"/><rect x="9.5" y="5" width="11" height="11" fill="none" stroke="#7e7e7e" stroke-width="1.4"/><path d="M15 18 V23 M12.5 22 L15 25.5 L17.5 22 Z" stroke="#7e7e7e" stroke-width="1.5" fill="#7e7e7e"/></svg>
<svg style="left:182px;top:669px" width="39" height="33" viewBox="0 0 39 33"><path d="M3.5 3 V30 M28.5 3 V30" stroke="#7e7e7e" stroke-width="1.3" stroke-dasharray="7 2"/><rect x="11" y="9" width="10.5" height="10.5" fill="none" stroke="#7e7e7e" stroke-width="1.4"/><path d="M5.5 14.3 L8.5 11.5 V17 Z M26.5 14.3 L23.5 11.5 V17 Z" fill="#7e7e7e"/><path d="M6 22 H26 L28 19.5" stroke="#d2d2d2" stroke-width="1.6" fill="none"/><path d="M6 24.5 H26" stroke="#d8d8d8" stroke-width="1.6"/></svg>
<div class="r" style="left:13px;top:705px;width:41px;height:16px;background:#e4e4e4;"></div>
<div class="r" style="left:56px;top:705px;width:40px;height:16px;background:#e4e4e4;"></div>
<div class="r" style="left:98px;top:705px;width:33px;height:16px;background:#f6f6f6;"></div>
<div class="r" style="left:133px;top:705px;width:5px;height:16px;background:#d6d6d6;"></div>
<svg style="left:132px;top:707px" width="6" height="8" viewBox="0 0 6 8"><path d="M0.5 0.7 H5.5 M0.5 3.2 H5.5 M3 3.2 V7.5" stroke="#000" stroke-width="1" fill="none"/><rect x="1.6" y="0.7" width="2.8" height="2.5" fill="#000"/></svg>
<svg style="left:13px;top:705px" width="41" height="16" viewBox="0 0 41 16"><path d="M4 4.5 H30" stroke="#7e7e7e" stroke-width="1.3" stroke-dasharray="7 2"/><path d="M17.5 6 L20 8.5 L17.5 11 L15 8.5 Z" fill="#7e7e7e"/><path d="M12 16 V13 H23 V16" fill="none" stroke="#7e7e7e" stroke-width="1.4"/></svg>
<svg style="left:56px;top:705px" width="40" height="16" viewBox="0 0 40 16"><path d="M3.5 16 V4.5 H29.5 V16" fill="none" stroke="#7e7e7e" stroke-width="1.3" stroke-dasharray="6 2"/><path d="M17 6 L19.5 8.5 L17 11 L14.5 8.5 Z" fill="#7e7e7e"/><path d="M11.5 16 V13 H22.5 V16" fill="none" stroke="#7e7e7e" stroke-width="1.4"/></svg>
<svg style="left:98px;top:705px" width="33" height="16" viewBox="0 0 33 16"><path d="M3.5 16 V4.5 M28.5 16 V4.5" fill="none" stroke="#7e7e7e" stroke-width="1.2" stroke-dasharray="2 2"/><path d="M16 5 V11 M13.8 7.5 L16 5 L18.2 7.5" fill="none" stroke="#7e7e7e" stroke-width="1.3"/><path d="M10.5 16 V13 H21.5 V16" fill="none" stroke="#7e7e7e" stroke-width="1.4"/></svg>
<svg style="left:143px;top:706px" width="28" height="15" viewBox="0 0 28 15"><text font-family="Liberation Sans, sans-serif" font-size="7" font-weight="700" fill="#000"><tspan x="2" y="15" rotate="-60">x</tspan><tspan x="6" y="9.5" rotate="-35">a</tspan><tspan x="11" y="6.5" rotate="-15">a</tspan><tspan x="17" y="6.5" rotate="10">*</tspan><tspan x="21" y="10" rotate="40">c</tspan></text></svg>
<span class="t" style="left:185px;top:705px;font-size:17px;font-weight:700;letter-spacing:-1.2px;height:16px;overflow:hidden;line-height:17px;">Nes</span>
<div class="r" style="left:195px;top:717px;width:18px;height:4px;background:#000;opacity:.85"></div>
<div class="r" style="left:253px;top:44px;width:16px;height:676px;background:#f0f0f0;"></div>
<div class="r" style="left:253px;top:78px;width:15px;height:355px;background:#cdcdcd;"></div>
<svg style="left:253px;top:59px" width="16" height="12" viewBox="0 0 16 12"><path d="M2.6 8.6 L7.8 3.4 L13 8.6" stroke="#565656" stroke-width="2.7" fill="none"/></svg>
<svg style="left:253px;top:693px" width="16" height="12" viewBox="0 0 16 12"><path d="M2.6 3 L7.8 8.2 L13 3" stroke="#565656" stroke-width="2.7" fill="none"/></svg>
<svg style="left:0;top:721px" width="270" height="26"><filter id="nz" x="0" y="0" width="100%" height="100%"><feTurbulence type="fractalNoise" baseFrequency="0.55" numOctaves="2" seed="4"/><feColorMatrix type="matrix" values="0.35 0 0 0 0.66  0.35 0 0 0 0.66  0.35 0 0 0 0.66  0 0 0 0 1"/></filter><rect width="270" height="26" fill="#d6d6d6" filter="url(#nz)"/></svg>
<div class="r" style="left:0px;top:721px;width:62px;height:25px;background:#f0f0f0;border-radius:0 0 6px 6px;"></div>
<div class="r" style="left:63px;top:722px;width:65px;height:25px;background:#f4f4f4;border-radius:0 4px 6px 6px;box-sizing:border-box;border:1px solid #fff;box-shadow:1px 1px 0 #999;"></div>
<span class="t" style="left:8px;top:727.00px;font-size:12px;font-weight:400;color:#000;font-style:normal;">Assistant</span>
<span class="t" style="left:70px;top:728.00px;font-size:12px;font-weight:400;color:#000;font-style:normal;">Toolpaths</span>
<div class="r" style="left:0px;top:746px;width:270px;height:1px;background:#8a8a8a;"></div>
<div class="r" style="left:0px;top:747px;width:1366px;height:21px;background:#f0f0f0;"></div>
<div class="r" style="left:277px;top:43px;width:813px;height:1px;background:#a0a0a0;"></div>
<span class="t" style="left:285px;top:51.00px;font-size:14px;font-weight:700;color:#000;font-style:normal;letter-spacing:-1.3px;">3D</span>
<svg style="left:306px;top:49px" width="18" height="18" viewBox="0 0 18 18"><path d="M12.6 12.4 L14.2 13.8" stroke="#cfa57c" stroke-width="3.6" stroke-linecap="round"/><circle cx="8" cy="8" r="5.7" fill="#d9edf8" stroke="#5d86a8" stroke-width="1.4"/><path d="M4 6.5 A4.5 4.5 0 0 1 9 3.2" stroke="#fff" stroke-width="1" fill="none" opacity=".8"/><path d="M4.6 8 H11.4 M8 4.6 V11.4" stroke="#2f5f8a" stroke-width="1.5"/></svg>
<svg style="left:329px;top:49px" width="18" height="18" viewBox="0 0 18 18"><path d="M12.6 12.4 L14.2 13.8" stroke="#cfa57c" stroke-width="3.6" stroke-linecap="round"/><circle cx="8" cy="8" r="5.7" fill="#d9edf8" stroke="#5d86a8" stroke-width="1.4"/><path d="M4 6.5 A4.5 4.5 0 0 1 9 3.2" stroke="#fff" stroke-width="1" fill="none" opacity=".8"/><path d="M4.6 8 H11.4" stroke="#2f5f8a" stroke-width="1.6"/></svg>
<svg style="left:352px;top:49px" width="18" height="18" viewBox="0 0 18 18"><path d="M12.6 12.4 L14.2 13.8" stroke="#cfa57c" stroke-width="3.6" stroke-linecap="round"/><circle cx="8" cy="8" r="5.7" fill="#d9edf8" stroke="#5d86a8" stroke-width="1.4"/><path d="M4 6.5 A4.5 4.5 0 0 1 9 3.2" stroke="#fff" stroke-width="1" fill="none" opacity=".8"/><path d="M5.2 6.2 A3.2 3.2 0 1 1 6 10.6" stroke="#a89a20" stroke-width="1.5" fill="none"/><path d="M3.4 5 L7 5 L5.2 8 Z" fill="#a89a20"/></svg>
<svg style="left:383px;top:49px" width="18" height="18" viewBox="0 0 18 18"><path d="M12.6 12.4 L14.2 13.8" stroke="#cfa57c" stroke-width="3.6" stroke-linecap="round"/><circle cx="8" cy="8" r="5.7" fill="#d9edf8" stroke="#5d86a8" stroke-width="1.4"/><path d="M4 6.5 A4.5 4.5 0 0 1 9 3.2" stroke="#fff" stroke-width="1" fill="none" opacity=".8"/><text x="8" y="10.3" font-family="Liberation Sans, sans-serif" font-size="6.5" font-weight="700" text-anchor="middle" fill="#5d86a8">1:1</text></svg>
<svg style="left:406px;top:49px" width="18" height="18" viewBox="0 0 18 18"><path d="M12.6 12.4 L14.2 13.8" stroke="#cfa57c" stroke-width="3.6" stroke-linecap="round"/><circle cx="8" cy="8" r="5.7" fill="#d9edf8" stroke="#5d86a8" stroke-width="1.4"/><path d="M4 6.5 A4.5 4.5 0 0 1 9 3.2" stroke="#fff" stroke-width="1" fill="none" opacity=".8"/><rect x="4.8" y="5.3" width="6.4" height="5.4" fill="none" stroke="#2f5f8a" stroke-width="1.3"/></svg>
<svg style="left:429px;top:48px" width="20" height="20" viewBox="0 0 20 20"><circle cx="8.5" cy="9" r="6.3" fill="#a3a3a3"/><path d="M12 12.5 L17 17" stroke="#a3a3a3" stroke-width="4.4" stroke-linecap="round"/><rect x="13" y="13" width="5" height="5" fill="#a3a3a3"/></svg>
<div class="r" style="left:459px;top:47px;width:22px;height:22px;background:#f9f9f9;box-sizing:border-box;border-left:1px solid #a5a5a5;border-top:1px solid #c5c5c5;"></div>
<div class="r" style="left:482px;top:47px;width:22px;height:22px;background:#f9f9f9;box-sizing:border-box;border-left:1px solid #a5a5a5;border-top:1px solid #c5c5c5;"></div>
<svg style="left:465px;top:51px" width="16" height="16" viewBox="0 0 16 16"><path d="M0 3.5 H7" stroke="#222" stroke-width="1" stroke-dasharray="2 1"/><path d="M0 5.9 H7" stroke="#222" stroke-width="1" stroke-dasharray="1 1"/><path d="M0 8.3 H7" stroke="#222" stroke-width="1" stroke-dasharray="2 1"/><path d="M0 10.7 H7" stroke="#222" stroke-width="1" stroke-dasharray="1 1"/><path d="M0 13.1 H7" stroke="#222" stroke-width="1" stroke-dasharray="2 1"/><path d="M0 15.5 H7" stroke="#222" stroke-width="1" stroke-dasharray="1 1"/><path d="M3.5 7.5 L8 3.5 V5.8 H13.5 V9.2 H8 V11.5 Z" fill="#6a6a6a" stroke="#000" stroke-width="1.1"/></svg>
<svg style="left:486px;top:51px" width="16" height="16" viewBox="0 0 16 16"><g transform="translate(8,0)"><path d="M0 3.5 H7" stroke="#222" stroke-width="1" stroke-dasharray="2 1"/><path d="M0 5.9 H7" stroke="#222" stroke-width="1" stroke-dasharray="1 1"/><path d="M0 8.3 H7" stroke="#222" stroke-width="1" stroke-dasharray="2 1"/><path d="M0 10.7 H7" stroke="#222" stroke-width="1" stroke-dasharray="1 1"/><path d="M0 13.1 H7" stroke="#222" stroke-width="1" stroke-dasharray="2 1"/><path d="M0 15.5 H7" stroke="#222" stroke-width="1" stroke-dasharray="1 1"/></g><path d="M12 7.5 L7.5 3.5 V5.8 H2 V9.2 H7.5 V11.5 Z" fill="#6a6a6a" stroke="#000" stroke-width="1.1"/></svg>
<svg style="left:506px;top:48px" width="20" height="20" viewBox="0 0 20 20"><path d="M2 10 L11 4.5 V15.5 Z" fill="#6d79c9"/><path d="M2 10 L11 4.5 V8 Z" fill="#8e98dd"/><circle cx="11.5" cy="8.5" r="3.6" fill="#d4e4f4" stroke="#9ab0cc" stroke-width="1"/><path d="M14 11.5 L16.5 14.5" stroke="#cfa57c" stroke-width="2.4" stroke-linecap="round"/></svg>
<div class="r" style="left:544px;top:58px;width:73px;height:2px;background:#8e8e8e;"></div>
<svg style="left:618px;top:49px" width="12" height="22" viewBox="0 0 12 22"><path d="M0.5 0.5 H9.5 V16 L5 20.5 L0.5 16 Z" fill="#f2f2f2" stroke="none"/><path d="M9.5 0.5 V16 L5.5 20" stroke="#7d7d7d" stroke-width="1.4" fill="none"/></svg>
<div class="r" style="left:377px;top:48px;width:1px;height:20px;background:#b0b0b0;"></div>
<div class="r" style="left:454px;top:48px;width:1px;height:20px;background:#b0b0b0;"></div>
<div class="r" style="left:531px;top:48px;width:1px;height:20px;background:#b0b0b0;"></div>
<div class="r" style="left:277px;top:74px;width:811px;height:1px;background:#a9a9a9;"></div>
<div class="r" style="left:277px;top:75px;width:811px;height:19px;background:#f0f0f0;"></div>
<div class="r" style="left:277px;top:94px;width:811px;height:1px;background:#a9a9a9;"></div>
<div class="r" style="left:277px;top:74px;width:1px;height:630px;background:#a9a9a9;"></div>
<div class="r" style="left:297px;top:75px;width:1px;height:610px;background:#a9a9a9;"></div>
<svg style="left:279px;top:77px" width="17" height="16" viewBox="0 0 17 16"><path d="M2 8.5 H15 M6.5 3 V14 M10.5 3 V14" stroke="#b0b0b0" stroke-width="1" stroke-dasharray="2 1.5" fill="none"/></svg>
<svg style="left:0;top:0" width="1366" height="768" viewBox="0 0 1366 768" shape-rendering="crispEdges"><path d="M308.5 92 V94 M313.5 90 V94 M319.5 92 V94 M325.5 92 V94 M330.5 92 V94 M336.5 92 V94 M342.5 88 V94 M347.5 92 V94 M353.5 92 V94 M359.5 92 V94 M364.5 92 V94 M370.5 90 V94 M376.5 92 V94 M382.5 92 V94 M387.5 92 V94 M393.5 92 V94 M399.5 88 V94 M404.5 92 V94 M410.5 92 V94 M416.5 92 V94 M421.5 92 V94 M427.5 90 V94 M433.5 92 V94 M438.5 92 V94 M444.5 92 V94 M450.5 92 V94 M456.5 88 V94 M461.5 92 V94 M467.5 92 V94 M473.5 92 V94 M478.5 92 V94 M484.5 90 V94 M490.5 92 V94 M495.5 92 V94 M501.5 92 V94 M507.5 92 V94 M512.5 88 V94 M518.5 92 V94 M524.5 92 V94 M530.5 92 V94 M535.5 92 V94 M541.5 90 V94 M547.5 92 V94 M552.5 92 V94 M558.5 92 V94 M564.5 92 V94 M569.5 88 V94 M575.5 92 V94 M581.5 92 V94 M586.5 92 V94 M592.5 92 V94 M598.5 90 V94 M604.5 92 V94 M609.5 92 V94 M615.5 92 V94 M621.5 92 V94 M626.5 88 V94 M632.5 92 V94 M638.5 92 V94 M643.5 92 V94 M649.5 92 V94 M655.5 90 V94 M660.5 92 V94 M666.5 92 V94 M672.5 92 V94 M678.5 92 V94 M683.5 88 V94 M689.5 92 V94 M695.5 92 V94 M700.5 92 V94 M706.5 92 V94 M712.5 90 V94 M717.5 92 V94 M723.5 92 V94 M729.5 92 V94 M734.5 92 V94 M740.5 88 V94 M746.5 92 V94 M752.5 92 V94 M757.5 92 V94 M763.5 92 V94 M769.5 90 V94 M774.5 92 V94 M780.5 92 V94 M786.5 92 V94 M791.5 92 V94 M797.5 88 V94 M803.5 92 V94 M808.5 92 V94 M814.5 92 V94 M820.5 92 V94 M826.5 90 V94 M831.5 92 V94 M837.5 92 V94 M843.5 92 V94 M848.5 92 V94 M854.5 88 V94 M860.5 92 V94 M865.5 92 V94 M871.5 92 V94 M877.5 92 V94 M882.5 90 V94 M888.5 92 V94 M894.5 92 V94 M899.5 92 V94 M905.5 92 V94 M911.5 88 V94 M917.5 92 V94 M922.5 92 V94 M928.5 92 V94 M934.5 92 V94 M939.5 90 V94 M945.5 92 V94 M951.5 92 V94 M956.5 92 V94 M962.5 92 V94 M968.5 88 V94 M973.5 92 V94 M979.5 92 V94 M985.5 92 V94 M991.5 92 V94 M996.5 90 V94 M1002.5 92 V94 M1008.5 92 V94 M1013.5 92 V94 M1019.5 92 V94 M1025.5 88 V94 M1030.5 92 V94 M1036.5 92 V94 M1042.5 92 V94 M1047.5 92 V94 M1053.5 90 V94 M1059.5 92 V94 M1065.5 92 V94 M295 679.5 H297 M291 673.5 H297 M295 668.5 H297 M295 662.5 H297 M295 656.5 H297 M295 651.5 H297 M293 645.5 H297 M295 639.5 H297 M295 634.5 H297 M295 628.5 H297 M295 622.5 H297 M291 616.5 H297 M295 611.5 H297 M295 605.5 H297 M295 599.5 H297 M295 594.5 H297 M293 588.5 H297 M295 582.5 H297 M295 577.5 H297 M295 571.5 H297 M295 565.5 H297 M291 560.5 H297 M295 554.5 H297 M295 548.5 H297 M295 542.5 H297 M295 537.5 H297 M293 531.5 H297 M295 525.5 H297 M295 520.5 H297 M295 514.5 H297 M295 508.5 H297 M291 503.5 H297 M295 497.5 H297 M295 491.5 H297 M295 486.5 H297 M295 480.5 H297 M293 474.5 H297 M295 468.5 H297 M295 463.5 H297 M295 457.5 H297 M295 451.5 H297 M291 446.5 H297 M295 440.5 H297 M295 434.5 H297 M295 429.5 H297 M295 423.5 H297 M293 417.5 H297 M295 412.5 H297 M295 406.5 H297 M295 400.5 H297 M295 394.5 H297 M291 389.5 H297 M295 383.5 H297 M295 377.5 H297 M295 372.5 H297 M295 366.5 H297 M293 360.5 H297 M295 355.5 H297 M295 349.5 H297 M295 343.5 H297 M295 338.5 H297 M291 332.5 H297 M295 326.5 H297 M295 320.5 H297 M295 315.5 H297 M295 309.5 H297 M293 303.5 H297 M295 298.5 H297 M295 292.5 H297 M295 286.5 H297 M295 281.5 H297 M291 275.5 H297 M295 269.5 H297 M295 264.5 H297 M295 258.5 H297 M295 252.5 H297 M293 246.5 H297 M295 241.5 H297 M295 235.5 H297 M295 229.5 H297 M295 224.5 H297 M291 218.5 H297 M295 212.5 H297 M295 207.5 H297 M295 201.5 H297 M295 195.5 H297 M293 190.5 H297 M295 184.5 H297 M295 178.5 H297 M295 173.5 H297 M295 167.5 H297 M291 161.5 H297 M295 155.5 H297 M295 150.5 H297 M295 144.5 H297 M295 138.5 H297 M293 133.5 H297 M295 127.5 H297 M295 121.5 H297 M295 116.5 H297 M295 110.5 H297 M291 104.5 H297 M295 99.5 H297 " stroke="#000" stroke-width="1" fill="none"/><path d="M308.5 77 V94" stroke="#000" stroke-width="1"/><path d="M279 104 H297" stroke="#000" stroke-width="2"/></svg>
<span class="t" style="left:310.7px;top:77px;width:60px;text-align:center;font-size:11px;">-1200</span>
<span class="t" style="left:367.6px;top:77px;width:60px;text-align:center;font-size:11px;">-1000</span>
<span class="t" style="left:424.5px;top:77px;width:60px;text-align:center;font-size:11px;">-800</span>
<span class="t" style="left:481.4px;top:77px;width:60px;text-align:center;font-size:11px;">-600</span>
<span class="t" style="left:538.4px;top:77px;width:60px;text-align:center;font-size:11px;">-400</span>
<span class="t" style="left:595.3px;top:77px;width:60px;text-align:center;font-size:11px;">-200</span>
<span class="t" style="left:652.2px;top:77px;width:60px;text-align:center;font-size:11px;">0</span>
<span class="t" style="left:709.1px;top:77px;width:60px;text-align:center;font-size:11px;">200</span>
<span class="t" style="left:766.0px;top:77px;width:60px;text-align:center;font-size:11px;">400</span>
<span class="t" style="left:823.0px;top:77px;width:60px;text-align:center;font-size:11px;">600</span>
<span class="t" style="left:879.9px;top:77px;width:60px;text-align:center;font-size:11px;">800</span>
<span class="t" style="left:936.8px;top:77px;width:60px;text-align:center;font-size:11px;">1000</span>
<span class="t" style="left:1028px;top:78.00px;font-size:9px;font-weight:400;color:#000;font-style:normal;letter-spacing:-0.12px;">millimetres</span>
<div class="r" style="left:1071px;top:75px;width:17px;height:19px;background:#e9e9e9;box-sizing:border-box;border:1px solid #9d9d9d;"></div>
<svg style="left:1071px;top:75px" width="17" height="19" viewBox="0 0 17 19"><path d="M4.5 6.5 H7.5 M9.5 6.5 H12.5" stroke="#000" stroke-width="1.4"/><path d="M4 9.5 H13 L8.5 14 Z" fill="#000"/><path d="M6 11.5 H11" stroke="#fff" stroke-width="0.7"/></svg>
<span class="t" style="left:256px;top:155.6px;width:60px;height:11px;text-align:center;font-size:11px;transform:rotate(-90deg);transform-origin:50% 50%;">800</span>
<span class="t" style="left:256px;top:212.5px;width:60px;height:11px;text-align:center;font-size:11px;transform:rotate(-90deg);transform-origin:50% 50%;">600</span>
<span class="t" style="left:256px;top:269.5px;width:60px;height:11px;text-align:center;font-size:11px;transform:rotate(-90deg);transform-origin:50% 50%;">400</span>
<span class="t" style="left:256px;top:326.4px;width:60px;height:11px;text-align:center;font-size:11px;transform:rotate(-90deg);transform-origin:50% 50%;">200</span>
<span class="t" style="left:256px;top:383.3px;width:60px;height:11px;text-align:center;font-size:11px;transform:rotate(-90deg);transform-origin:50% 50%;">0</span>
<span class="t" style="left:256px;top:440.2px;width:60px;height:11px;text-align:center;font-size:11px;transform:rotate(-90deg);transform-origin:50% 50%;">-200</span>
<span class="t" style="left:256px;top:497.1px;width:60px;height:11px;text-align:center;font-size:11px;transform:rotate(-90deg);transform-origin:50% 50%;">-400</span>
<span class="t" style="left:256px;top:554.1px;width:60px;height:11px;text-align:center;font-size:11px;transform:rotate(-90deg);transform-origin:50% 50%;">-600</span>
<span class="t" style="left:256px;top:611.0px;width:60px;height:11px;text-align:center;font-size:11px;transform:rotate(-90deg);transform-origin:50% 50%;">-800</span>
<div class="r" style="left:465px;top:100px;width:435px;height:579px;background:#ffff80;box-sizing:border-box;border:1px solid #000;"></div>
<div class="r" style="left:585px;top:143px;width:195px;height:492px;background:#666666;"></div>
<svg style="left:0;top:0" width="1366" height="768" viewBox="0 0 1366 768"><defs><linearGradient id="mL" x1="0" x2="1" y1="0" y2="0"><stop offset="0" stop-color="#fff"/><stop offset=".23" stop-color="#fff"/><stop offset=".3" stop-color="#d2d2d2"/><stop offset=".52" stop-color="#929292"/><stop offset=".76" stop-color="#525252"/><stop offset=".9" stop-color="#4a4a3e"/><stop offset="1" stop-color="#6c6c38"/></linearGradient><linearGradient id="mR" x1="1" x2="0" y1="0" y2="0"><stop offset="0" stop-color="#fff"/><stop offset=".23" stop-color="#fff"/><stop offset=".3" stop-color="#d2d2d2"/><stop offset=".52" stop-color="#929292"/><stop offset=".76" stop-color="#525252"/><stop offset=".9" stop-color="#4a4a3e"/><stop offset="1" stop-color="#6c6c38"/></linearGradient><linearGradient id="mT" x1="0" x2="0" y1="0" y2="1"><stop offset="0" stop-color="#fff"/><stop offset=".23" stop-color="#fff"/><stop offset=".3" stop-color="#d2d2d2"/><stop offset=".52" stop-color="#929292"/><stop offset=".76" stop-color="#525252"/><stop offset=".9" stop-color="#4a4a3e"/><stop offset="1" stop-color="#6c6c38"/></linearGradient><linearGradient id="mB" x1="0" x2="0" y1="1" y2="0"><stop offset="0" stop-color="#fff"/><stop offset=".23" stop-color="#fff"/><stop offset=".3" stop-color="#d2d2d2"/><stop offset=".52" stop-color="#929292"/><stop offset=".76" stop-color="#525252"/><stop offset=".9" stop-color="#4a4a3e"/><stop offset="1" stop-color="#6c6c38"/></linearGradient><linearGradient id="gnd" x1="0" x2="0" y1="0" y2="1"><stop offset="0" stop-color="#8c8c8c"/><stop offset=".45" stop-color="#c8c8c8"/><stop offset="1" stop-color="#f0f0f0"/></linearGradient><clipPath id="inner"><rect x="614" y="171" width="138" height="436"/></clipPath></defs><rect x="614" y="171" width="138" height="436" fill="#ffff80"/><path d="M603 160 L614 171 V607 L603 618 Z" fill="url(#mL)" shape-rendering="crispEdges"/><path d="M763 160 L752 171 V607 L763 618 Z" fill="url(#mR)" shape-rendering="crispEdges"/><path d="M603 160 L614 171 H752 L763 160 Z" fill="url(#mT)" shape-rendering="crispEdges"/><path d="M603 618 L614 607 H752 L763 618 Z" fill="url(#mB)" shape-rendering="crispEdges"/><g clip-path="url(#inner)"><path d="M617.8 583.8 L631.1 580.6 L643.6 576.7 L673.3 577.5 L690.5 574.4 L703.0 571.2 L735.8 586.9 L744.4 605.6 L744.4 610.0 L617.8 610.0 Z" fill="url(#gnd)"/><path d="M653.8 206.8 L652.5 230.2 L647.5 256.8 L647.9 280.3 L658.1 279.7 L655.3 257.0 L656.6 230.5 L656.9 206.9 Z" fill="#5a5a5a" stroke="#5a5a5a" stroke-width="0.6" stroke-linejoin="round"/><path d="M656.0 206.9 L655.4 230.4 L653.1 256.9 L655.2 279.9" fill="none" stroke="#787878" stroke-width="2.2" stroke-linecap="round" stroke-linejoin="round" opacity=".6"/><path d="M668.9 196.3 L654.9 211.2 L657.4 213.5 L671.4 198.7 Z" fill="#555555" stroke="#555555" stroke-width="0.6" stroke-linejoin="round"/><path d="M670.7 198.0 L656.7 212.8" fill="none" stroke="#737373" stroke-width="1.2" stroke-linecap="round" stroke-linejoin="round" opacity=".6"/><path d="M673.8 203.7 L673.0 219.3 L675.2 219.4 L676.0 203.8 Z" fill="#666666" stroke="#666666" stroke-width="0.6" stroke-linejoin="round"/><path d="M675.3 203.8 L674.6 219.4" fill="none" stroke="#848484" stroke-width="0.8" stroke-linecap="round" stroke-linejoin="round" opacity=".6"/><path d="M647.7 271.4 L651.4 289.4 L658.7 308.8 L667.8 331.1 L678.0 349.7 L690.5 343.4 L682.0 324.5 L672.3 303.0 L664.0 285.0 L658.3 268.6 Z" fill="#565656" stroke="#565656" stroke-width="0.6" stroke-linejoin="round"/><path d="M655.2 269.4 L660.4 286.3 L668.4 304.7 L677.9 326.4 L686.9 345.2" fill="none" stroke="#747474" stroke-width="4.8" stroke-linecap="round" stroke-linejoin="round" opacity=".6"/><path d="M688.0 248.5 L694.7 269.2 L698.8 281.6 L707.2 278.4 L702.0 266.4 L693.0 246.5 Z" fill="#a3a3a3" stroke="#a3a3a3" stroke-width="0.6" stroke-linejoin="round"/><path d="M691.6 247.1 L699.9 267.2 L704.8 279.3" fill="none" stroke="#c1c1c1" stroke-width="2.6" stroke-linecap="round" stroke-linejoin="round" opacity=".6"/><path d="M696.0 270.3 L696.3 287.2 L694.6 305.1 L689.9 322.6 L680.4 343.1 L669.8 363.8 L663.5 387.8 L680.0 392.2 L686.2 370.0 L695.9 350.0 L703.6 326.8 L706.7 306.7 L707.2 287.2 L705.3 269.7 Z" fill="#a0a0a0" stroke="#a0a0a0" stroke-width="0.6" stroke-linejoin="round"/><path d="M702.6 269.9 L704.1 287.2 L703.2 306.3 L699.7 325.6 L691.4 348.0 L681.5 368.2 L675.3 391.0" fill="none" stroke="#bebebe" stroke-width="4.9" stroke-linecap="round" stroke-linejoin="round" opacity=".6"/><path d="M666.8 377.4 L659.8 392.4 L648.6 407.5 L640.3 420.8 L634.2 440.5 L629.8 459.9 L627.1 480.9 L626.3 499.6 L643.8 500.4 L644.5 482.3 L646.5 462.6 L649.9 444.5 L654.8 426.7 L660.5 415.0 L671.2 398.9 L678.2 382.6 Z" fill="#6a6a6a" stroke="#6a6a6a" stroke-width="0.6" stroke-linejoin="round"/><path d="M675.0 381.1 L667.9 397.0 L657.1 412.9 L650.6 425.0 L645.4 443.3 L641.7 461.8 L639.5 481.9 L638.7 500.2" fill="none" stroke="#888888" stroke-width="5.4" stroke-linecap="round" stroke-linejoin="round" opacity=".6"/><path d="M626.4 491.6 L630.0 509.4 L636.8 527.2 L644.2 545.9 L650.4 561.7 L656.7 577.3 L671.2 571.5 L664.9 555.8 L658.7 540.3 L652.0 521.6 L646.3 505.0 L643.6 488.4 Z" fill="#686868" stroke="#686868" stroke-width="0.6" stroke-linejoin="round"/><path d="M638.7 489.3 L641.6 506.2 L647.6 523.2 L654.5 541.9 L660.8 557.5 L667.0 573.1" fill="none" stroke="#868686" stroke-width="5.7" stroke-linecap="round" stroke-linejoin="round" opacity=".6"/><path d="M687.1 380.1 L687.1 400.0 L685.3 417.2 L676.9 437.0 L670.9 456.8 L668.6 479.6 L667.8 499.8 L683.5 500.2 L683.6 480.4 L685.1 459.4 L690.1 441.8 L698.9 420.9 L700.8 400.6 L700.2 379.9 Z" fill="#626262" stroke="#626262" stroke-width="0.6" stroke-linejoin="round"/><path d="M696.4 380.0 L696.9 400.4 L694.9 419.8 L686.3 440.4 L681.0 458.7 L679.3 480.2 L679.0 500.1" fill="none" stroke="#808080" stroke-width="5.0" stroke-linecap="round" stroke-linejoin="round" opacity=".6"/><path d="M667.9 491.0 L670.1 510.1 L674.3 530.3 L676.1 553.0 L676.4 577.7 L693.6 577.3 L693.0 552.0 L690.4 527.9 L685.9 507.4 L683.4 489.0 Z" fill="#666666" stroke="#666666" stroke-width="0.6" stroke-linejoin="round"/><path d="M679.0 489.6 L681.3 508.2 L685.8 528.6 L688.1 552.3 L688.7 577.4" fill="none" stroke="#848484" stroke-width="5.7" stroke-linecap="round" stroke-linejoin="round" opacity=".6"/><path d="M707.7 470.1 L707.7 486.4 L707.5 500.0 L724.1 500.0 L723.9 486.1 L722.7 469.6 Z" fill="#ababab" stroke="#ababab" stroke-width="0.6" stroke-linejoin="round"/><path d="M718.4 469.7 L719.3 486.2 L719.3 500.0" fill="none" stroke="#c9c9c9" stroke-width="5.6" stroke-linecap="round" stroke-linejoin="round" opacity=".6"/><ellipse cx="714.9" cy="468.8" rx="7" ry="2.6" fill="#707070" transform="rotate(8 714.9 468.8)"/><path d="M707.9 487.7 L703.0 505.0 L698.3 523.8 L700.5 545.2 L708.4 562.6 L716.7 575.4 L729.9 567.1 L722.6 554.9 L715.5 541.1 L713.9 525.0 L718.6 509.4 L723.8 492.3 Z" fill="#9a9a9a" stroke="#9a9a9a" stroke-width="0.6" stroke-linejoin="round"/><path d="M719.2 491.0 L714.1 508.1 L709.4 524.6 L711.2 542.3 L718.5 557.1 L726.1 569.5" fill="none" stroke="#b8b8b8" stroke-width="5.6" stroke-linecap="round" stroke-linejoin="round" opacity=".6"/><path d="M695.2 579.1 L703.0 566.6 L712.4 557.2 L721.8 550.2 L732.7 552.5 L737.7 563.4 L740.2 579.1 L735.0 597.8 L721.8 600.2 L703.0 587.7 Z" fill="#b2b2b2"/><path d="M712.4 558.8 L721.8 551.2 L732.4 553.8 L735.8 563.4 L728.0 558.4 L718.6 560.3 Z" fill="#d0d0d0"/><ellipse cx="723.3" cy="566.6" rx="6.5" ry="5" fill="#787878"/><ellipse cx="724.2" cy="567.5" rx="5" ry="3.4" fill="#8c8c8c"/><path d="M703.0 585.3 L721.8 591.6 L735.8 588.4 L733.9 598.6 L719.4 601.2 L704.6 591.6 Z" fill="#8e8e8e"/><path d="M626.4 523.6 L631.9 530.6 L638.9 541.6 L648.3 558.8 L656.1 579.1 L631.1 580.6 L628.8 557.2 L628.0 540.0 Z" fill="#8b8b8b"/><path d="M626.4 523.6 L628.8 540.0 L629.6 557.2 L631.9 580.6 L640.5 579.8 L636.6 552.5 L632.7 535.3 Z" fill="#767676"/><path d="M636.6 195.2 Q635.7 184.6 621.0 186.6 Q627.2 200.1 636.6 195.2 Z" fill="#2c2c2c"/><path d="M636.6 195.2 Q635.7 184.6 621.0 186.6 Z" fill="#4c4c4c"/><path d="M636.6 195.2 Q648.0 194.3 649.1 177.2 Q633.4 184.2 636.6 195.2 Z" fill="#3a3a3a"/><path d="M636.6 195.2 Q648.0 194.3 649.1 177.2 Z" fill="#5a5a5a"/><path d="M636.6 195.2 Q644.6 204.8 663.2 197.5 Q646.1 187.1 636.6 195.2 Z" fill="#404040"/><path d="M636.6 195.2 Q644.6 204.8 663.2 197.5 Z" fill="#606060"/><path d="M636.6 195.2 Q623.9 194.6 621.8 213.1 Q639.5 207.5 636.6 195.2 Z" fill="#565656"/><path d="M636.6 195.2 Q623.9 194.6 621.8 213.1 Z" fill="#767676"/><path d="M636.6 195.2 Q636.9 208.1 656.1 210.0 Q649.2 192.0 636.6 195.2 Z" fill="#3c3c3c"/><path d="M636.6 195.2 Q636.9 208.1 656.1 210.0 Z" fill="#5c5c5c"/><path d="M668.6 180.3 Q663.5 168.9 643.6 170.9 Q657.3 185.5 668.6 180.3 Z" fill="#565656"/><path d="M668.6 180.3 Q663.5 168.9 643.6 170.9 Z" fill="#767676"/><path d="M665.5 180.3 Q655.5 177.3 653.0 191.2 Q667.2 190.6 665.5 180.3 Z" fill="#787878"/><path d="M665.5 180.3 Q655.5 177.3 653.0 191.2 Z" fill="#989898"/><path d="M668.6 180.3 Q658.5 186.5 668.6 199.1 Q678.8 186.5 668.6 180.3 Z" fill="#8a8a8a"/><path d="M668.6 180.3 Q658.5 186.5 668.6 199.1 Z" fill="#aaaaaa"/><path d="M671.8 180.3 Q665.6 196.3 687.4 211.6 Q688.2 185.0 671.8 180.3 Z" fill="#535353"/><path d="M671.8 180.3 Q665.6 196.3 687.4 211.6 Z" fill="#737373"/><path d="M671.8 180.3 Q672.2 191.3 688.2 191.2 Q682.1 176.6 671.8 180.3 Z" fill="#454545"/><path d="M671.8 180.3 Q672.2 191.3 688.2 191.2 Z" fill="#656565"/><path d="M703.0 185.0 Q696.3 172.3 673.3 175.6 Q690.2 191.6 703.0 185.0 Z" fill="#565656"/><path d="M703.0 185.0 Q696.3 172.3 673.3 175.6 Z" fill="#767676"/><path d="M699.9 183.4 Q685.8 191.3 695.2 213.1 Q710.8 195.2 699.9 183.4 Z" fill="#7c7c7c"/><path d="M699.9 183.4 Q685.8 191.3 695.2 213.1 Z" fill="#9c9c9c"/><path d="M703.0 186.6 Q691.0 201.4 708.5 225.6 Q718.6 197.5 703.0 186.6 Z" fill="#404040"/><path d="M703.0 186.6 Q691.0 201.4 708.5 225.6 Z" fill="#606060"/><path d="M704.6 183.4 Q697.8 196.0 715.5 206.9 Q718.5 186.4 704.6 183.4 Z" fill="#565656"/><path d="M704.6 183.4 Q697.8 196.0 715.5 206.9 Z" fill="#767676"/><path d="M712.4 180.3 Q710.3 171.1 696.8 173.3 Q704.1 184.9 712.4 180.3 Z" fill="#454545"/><path d="M712.4 180.3 Q710.3 171.1 696.8 173.3 Z" fill="#656565"/><path d="M726.4 177.2 Q733.8 181.0 741.3 170.9 Q728.9 169.3 726.4 177.2 Z" fill="#232323"/><path d="M726.4 177.2 Q733.8 181.0 741.3 170.9 Z" fill="#434343"/><path d="M726.4 177.2 Q723.8 168.2 710.8 171.7 Q718.8 182.6 726.4 177.2 Z" fill="#343434"/><path d="M726.4 177.2 Q723.8 168.2 710.8 171.7 Z" fill="#545454"/><path d="M728.0 178.8 Q720.7 192.9 740.5 205.3 Q743.6 182.1 728.0 178.8 Z" fill="#404040"/><path d="M728.0 178.8 Q720.7 192.9 740.5 205.3 Z" fill="#606060"/><path d="M729.6 189.7 Q720.9 201.5 736.6 217.0 Q742.9 195.9 729.6 189.7 Z" fill="#161616"/><path d="M729.6 189.7 Q720.9 201.5 736.6 217.0 Z" fill="#363636"/><path d="M724.9 180.3 Q715.1 187.5 721.8 205.3 Q732.6 189.7 724.9 180.3 Z" fill="#454545"/><path d="M724.9 180.3 Q715.1 187.5 721.8 205.3 Z" fill="#656565"/><path d="M649.9 213.1 Q638.7 207.6 624.9 221.7 Q644.5 224.3 649.9 213.1 Z" fill="#989898"/><path d="M649.9 213.1 Q638.7 207.6 624.9 221.7 Z" fill="#b8b8b8"/><path d="M649.9 214.7 Q635.7 210.9 627.2 231.1 Q649.1 229.3 649.9 214.7 Z" fill="#b6b6b6"/><path d="M649.9 214.7 Q635.7 210.9 627.2 231.1 Z" fill="#d6d6d6"/><path d="M653.0 214.7 Q641.1 219.9 651.4 233.4 Q663.8 221.8 653.0 214.7 Z" fill="#c6c6c6"/><path d="M653.0 214.7 Q641.1 219.9 651.4 233.4 Z" fill="#e6e6e6"/><path d="M654.6 213.1 Q648.4 227.4 668.6 236.6 Q670.1 214.3 654.6 213.1 Z" fill="#676767"/><path d="M654.6 213.1 Q648.4 227.4 668.6 236.6 Z" fill="#878787"/><path d="M656.1 238.1 Q652.1 227.0 634.2 229.5 Q645.7 243.5 656.1 238.1 Z" fill="#cacaca"/><path d="M656.1 238.1 Q652.1 227.0 634.2 229.5 Z" fill="#eaeaea"/><path d="M656.1 238.1 Q643.2 230.2 622.5 244.4 Q646.9 250.1 656.1 238.1 Z" fill="#c8c8c8"/><path d="M656.1 238.1 Q643.2 230.2 622.5 244.4 Z" fill="#e8e8e8"/><path d="M656.1 238.1 Q636.1 239.0 621.0 269.4 Q652.9 257.9 656.1 238.1 Z" fill="#949494"/><path d="M656.1 238.1 Q636.1 239.0 621.0 269.4 Z" fill="#b4b4b4"/><path d="M657.7 238.1 Q640.7 238.8 635.8 264.7 Q660.2 254.9 657.7 238.1 Z" fill="#d8d8d8"/><path d="M657.7 238.1 Q640.7 238.8 635.8 264.7 Z" fill="#f8f8f8"/><path d="M659.2 238.1 Q643.8 242.8 648.3 266.2 Q667.4 252.0 659.2 238.1 Z" fill="#d6d6d6"/><path d="M659.2 238.1 Q643.8 242.8 648.3 266.2 Z" fill="#f6f6f6"/><path d="M661.6 239.7 Q651.7 249.8 662.4 269.4 Q672.0 249.2 661.6 239.7 Z" fill="#b8b8b8"/><path d="M661.6 239.7 Q651.7 249.8 662.4 269.4 Z" fill="#d8d8d8"/><path d="M678.0 222.5 Q674.6 214.2 663.9 220.2 Q672.1 229.2 678.0 222.5 Z" fill="#676767"/><path d="M678.0 222.5 Q674.6 214.2 663.9 220.2 Z" fill="#878787"/><path d="M678.0 222.5 Q687.3 230.3 703.0 219.4 Q685.2 212.7 678.0 222.5 Z" fill="#676767"/><path d="M678.0 222.5 Q687.3 230.3 703.0 219.4 Z" fill="#878787"/><path d="M676.4 222.5 Q664.3 230.3 674.1 249.1 Q687.0 232.3 676.4 222.5 Z" fill="#989898"/><path d="M676.4 222.5 Q664.3 230.3 674.1 249.1 Z" fill="#b8b8b8"/><path d="M679.6 222.5 Q668.6 234.7 684.2 253.8 Q693.6 230.9 679.6 222.5 Z" fill="#a8a8a8"/><path d="M679.6 222.5 Q668.6 234.7 684.2 253.8 Z" fill="#c8c8c8"/><path d="M681.1 222.5 Q676.7 235.5 695.2 241.2 Q694.9 221.9 681.1 222.5 Z" fill="#787878"/><path d="M681.1 222.5 Q676.7 235.5 695.2 241.2 Z" fill="#989898"/><path d="M684.2 235.0 Q676.4 246.9 690.5 264.7 Q696.2 242.7 684.2 235.0 Z" fill="#898989"/><path d="M684.2 235.0 Q676.4 246.9 690.5 264.7 Z" fill="#a9a9a9"/><path d="M710.8 235.0 Q723.5 238.3 731.1 220.2 Q711.5 221.9 710.8 235.0 Z" fill="#a8a8a8"/><path d="M710.8 235.0 Q723.5 238.3 731.1 220.2 Z" fill="#c8c8c8"/><path d="M710.8 236.6 Q721.6 246.2 742.1 235.0 Q720.6 225.9 710.8 236.6 Z" fill="#a4a4a4"/><path d="M710.8 236.6 Q721.6 246.2 742.1 235.0 Z" fill="#c4c4c4"/><path d="M712.4 239.7 Q713.7 257.9 742.1 266.2 Q730.6 239.0 712.4 239.7 Z" fill="#a6a6a6"/><path d="M712.4 239.7 Q713.7 257.9 742.1 266.2 Z" fill="#c6c6c6"/><path d="M710.8 239.7 Q704.7 253.0 723.3 264.7 Q725.1 242.8 710.8 239.7 Z" fill="#d6d6d6"/><path d="M710.8 239.7 Q704.7 253.0 723.3 264.7 Z" fill="#f6f6f6"/><path d="M709.2 239.7 Q697.5 243.4 703.0 260.0 Q716.9 249.4 709.2 239.7 Z" fill="#d8d8d8"/><path d="M709.2 239.7 Q697.5 243.4 703.0 260.0 Z" fill="#f8f8f8"/><path d="M710.8 241.2 Q702.5 250.5 712.4 267.8 Q720.2 249.5 710.8 241.2 Z" fill="#c8c8c8"/><path d="M710.8 241.2 Q702.5 250.5 712.4 267.8 Z" fill="#e8e8e8"/><path d="M670.2 260.0 Q668.6 273.8 688.2 275.6 Q683.6 256.6 670.2 260.0 Z" fill="#383838"/><path d="M670.2 260.0 Q668.6 273.8 688.2 275.6 Z" fill="#585858"/><path d="M688.2 274.8 Q677.2 268.3 660.8 281.1 Q681.1 285.5 688.2 274.8 Z" fill="#5a5a5a"/><path d="M688.2 274.8 Q677.2 268.3 660.8 281.1 Z" fill="#7a7a7a"/><path d="M717.8 269.4 Q711.8 274.8 718.6 285.0 Q724.4 274.2 717.8 269.4 Z" fill="#676767"/><path d="M717.8 269.4 Q711.8 274.8 718.6 285.0 Z" fill="#878787"/><path d="M684.2 282.5 Q673.5 274.2 653.0 284.1 Q674.4 291.9 684.2 282.5 Z" fill="#898989"/><path d="M684.2 282.5 Q673.5 274.2 653.0 284.1 Z" fill="#a9a9a9"/><path d="M684.2 284.1 Q673.7 277.8 655.3 288.0 Q675.7 292.9 684.2 284.1 Z" fill="#a8a8a8"/><path d="M684.2 284.1 Q673.7 277.8 655.3 288.0 Z" fill="#c8c8c8"/><path d="M684.2 285.6 Q669.1 283.2 660.0 305.2 Q683.4 300.9 684.2 285.6 Z" fill="#898989"/><path d="M684.2 285.6 Q669.1 283.2 660.0 305.2 Z" fill="#a9a9a9"/><path d="M685.8 284.1 Q668.8 290.2 674.1 316.9 Q695.1 299.6 685.8 284.1 Z" fill="#a8a8a8"/><path d="M685.8 284.1 Q668.8 290.2 674.1 316.9 Z" fill="#c8c8c8"/><path d="M688.9 284.1 Q679.3 293.4 690.5 310.6 Q699.6 292.2 688.9 284.1 Z" fill="#898989"/><path d="M688.9 284.1 Q679.3 293.4 690.5 310.6 Z" fill="#a9a9a9"/><path d="M631.1 318.4 Q640.3 305.5 624.9 285.6 Q617.9 309.7 631.1 318.4 Z" fill="#676767"/><path d="M631.1 318.4 Q640.3 305.5 624.9 285.6 Z" fill="#878787"/><path d="M629.6 320.0 Q633.9 308.8 618.6 298.1 Q618.0 316.7 629.6 320.0 Z" fill="#898989"/><path d="M629.6 320.0 Q633.9 308.8 618.6 298.1 Z" fill="#a9a9a9"/><path d="M631.1 318.4 Q644.3 314.7 643.6 293.4 Q626.2 305.7 631.1 318.4 Z" fill="#9a9a9a"/><path d="M631.1 318.4 Q644.3 314.7 643.6 293.4 Z" fill="#bababa"/><path d="M634.2 318.4 Q649.0 315.7 659.2 291.9 Q636.0 303.6 634.2 318.4 Z" fill="#565656"/><path d="M634.2 318.4 Q649.0 315.7 659.2 291.9 Z" fill="#767676"/><path d="M634.2 320.0 Q644.3 327.2 654.6 313.0 Q637.6 308.1 634.2 320.0 Z" fill="#454545"/><path d="M634.2 320.0 Q644.3 327.2 654.6 313.0 Z" fill="#656565"/><path d="M635.8 332.5 Q646.4 344.6 670.2 334.8 Q647.9 321.9 635.8 332.5 Z" fill="#ababab"/><path d="M635.8 332.5 Q646.4 344.6 670.2 334.8 Z" fill="#cbcbcb"/><path d="M634.2 334.1 Q617.7 343.1 624.9 371.6 Q644.7 349.8 634.2 334.1 Z" fill="#b8b8b8"/><path d="M634.2 334.1 Q617.7 343.1 624.9 371.6 Z" fill="#d8d8d8"/><path d="M636.6 335.6 Q625.9 349.4 642.1 371.6 Q650.9 345.6 636.6 335.6 Z" fill="#a4a4a4"/><path d="M636.6 335.6 Q625.9 349.4 642.1 371.6 Z" fill="#c4c4c4"/><path d="M637.4 334.1 Q639.4 345.7 657.7 346.6 Q648.7 330.6 637.4 334.1 Z" fill="#b8b8b8"/><path d="M637.4 334.1 Q639.4 345.7 657.7 346.6 Z" fill="#d8d8d8"/><path d="M643.6 351.2 Q644.4 366.7 665.5 385.6 Q657.3 358.5 643.6 351.2 Z" fill="#9a9a9a"/><path d="M643.6 351.2 Q644.4 366.7 665.5 385.6 Z" fill="#bababa"/><path d="M659.2 366.9 Q670.6 359.6 663.2 340.3 Q650.5 356.6 659.2 366.9 Z" fill="#898989"/><path d="M659.2 366.9 Q670.6 359.6 663.2 340.3 Z" fill="#a9a9a9"/><path d="M660.8 365.3 Q673.5 371.5 688.9 355.2 Q666.7 352.4 660.8 365.3 Z" fill="#a8a8a8"/><path d="M660.8 365.3 Q673.5 371.5 688.9 355.2 Z" fill="#c8c8c8"/><path d="M717.1 298.1 Q728.7 289.7 717.8 271.6 Q705.9 289.0 717.1 298.1 Z" fill="#676767"/><path d="M717.1 298.1 Q728.7 289.7 717.8 271.6 Z" fill="#878787"/><path d="M718.6 299.7 Q728.2 308.0 746.0 298.1 Q727.1 290.3 718.6 299.7 Z" fill="#898989"/><path d="M718.6 299.7 Q728.2 308.0 746.0 298.1 Z" fill="#a9a9a9"/><path d="M715.5 301.2 Q703.8 295.8 693.6 312.2 Q712.8 313.9 715.5 301.2 Z" fill="#9a9a9a"/><path d="M715.5 301.2 Q703.8 295.8 693.6 312.2 Z" fill="#bababa"/><path d="M718.6 302.8 Q724.2 299.7 724.9 288.8 Q717.2 296.6 718.6 302.8 Z" fill="#565656"/><path d="M718.6 302.8 Q724.2 299.7 724.9 288.8 Z" fill="#767676"/><path d="M715.5 307.5 Q706.5 317.9 718.6 335.6 Q726.6 315.7 715.5 307.5 Z" fill="#b8b8b8"/><path d="M715.5 307.5 Q706.5 317.9 718.6 335.6 Z" fill="#d8d8d8"/><path d="M692.1 357.5 Q700.8 370.8 724.9 363.8 Q705.0 348.4 692.1 357.5 Z" fill="#676767"/><path d="M692.1 357.5 Q700.8 370.8 724.9 363.8 Z" fill="#878787"/><path d="M692.8 363.8 Q690.9 380.5 715.5 388.8 Q709.7 363.5 692.8 363.8 Z" fill="#b8b8b8"/><path d="M692.8 363.8 Q690.9 380.5 715.5 388.8 Z" fill="#d8d8d8"/><path d="M690.5 363.8 Q675.3 366.9 679.6 388.8 Q698.5 377.1 690.5 363.8 Z" fill="#9a9a9a"/><path d="M690.5 363.8 Q675.3 366.9 679.6 388.8 Z" fill="#bababa"/><path d="M691.3 366.9 Q682.6 377.1 695.2 393.4 Q702.6 374.2 691.3 366.9 Z" fill="#898989"/><path d="M691.3 366.9 Q682.6 377.1 695.2 393.4 Z" fill="#a9a9a9"/><path d="M721.8 305.9 L730.3 313.8 L732.7 326.2 L731.4 340.3 L728.0 354.4" fill="none" stroke="#d8d8d8" stroke-width="3" stroke-linecap="round" stroke-linejoin="round"/><path d="M711.6 350.5 L721.8 347.3 L728.0 343.4 L732.7 351.2 L746.8 352.0 L737.4 357.5 L726.4 359.1 L717.1 353.6 Z" fill="#e2e2e2"/><path d="M694 362 C708 363 724 370 732 382 C737 391 739 402 739.5 413 C734 402 727 394 718 387 C708 380 699 371 694 362 Z" fill="#3e3e3e"/><path d="M694 362 C708 363 724 370 732 382 C737 391 739 402 739.5 413 C735 398 728 385 716 375 C708 369 700 365 694 362 Z" fill="#585858"/><path d="M728 373 C733 377 737 384 737.5 391 C735 385 731 379 726 376 Z" fill="#2e2e2e"/><path d="M693.6 380.0 Q684.7 387.1 696.8 395.6 Q704.6 383.2 693.6 380.0 Z" fill="#b8b8b8"/><path d="M693.6 380.0 Q684.7 387.1 696.8 395.6 Z" fill="#d8d8d8"/><path d="M706.1 380.0 Q704.4 389.0 717.1 390.9 Q715.1 378.2 706.1 380.0 Z" fill="#b8b8b8"/><path d="M706.1 380.0 Q704.4 389.0 717.1 390.9 Z" fill="#d8d8d8"/><path d="M693.6 419.1 Q708.3 420.2 718.6 398.8 Q695.5 404.5 693.6 419.1 Z" fill="#9a9a9a"/><path d="M693.6 419.1 Q708.3 420.2 718.6 398.8 Z" fill="#bababa"/><path d="M695.2 420.6 Q702.5 435.9 728.0 430.0 Q709.5 411.5 695.2 420.6 Z" fill="#a8a8a8"/><path d="M695.2 420.6 Q702.5 435.9 728.0 430.0 Z" fill="#c8c8c8"/><path d="M692.1 422.2 Q675.2 420.7 667.1 445.6 Q692.5 439.2 692.1 422.2 Z" fill="#b8b8b8"/><path d="M692.1 422.2 Q675.2 420.7 667.1 445.6 Z" fill="#d8d8d8"/><path d="M693.6 437.8 Q684.2 450.9 699.1 472.2 Q706.7 447.4 693.6 437.8 Z" fill="#787878"/><path d="M693.6 437.8 Q684.2 450.9 699.1 472.2 Z" fill="#989898"/><path d="M692.1 423.8 Q676.8 431.1 682.7 456.6 Q701.1 438.1 692.1 423.8 Z" fill="#cccccc"/><path d="M692.1 423.8 Q676.8 431.1 682.7 456.6 Z" fill="#ececec"/><path d="M695.2 423.8 Q686.7 436.8 703.0 455.0 Q708.8 431.3 695.2 423.8 Z" fill="#b8b8b8"/><path d="M695.2 423.8 Q686.7 436.8 703.0 455.0 Z" fill="#d8d8d8"/><path d="M684.2 419.1 Q677.0 412.7 662.4 419.1 Q677.0 425.4 684.2 419.1 Z" fill="#9a9a9a"/><path d="M684.2 419.1 Q677.0 412.7 662.4 419.1 Z" fill="#bababa"/><path d="M703.0 426.9 Q706.0 436.0 721.8 437.8 Q712.4 425.0 703.0 426.9 Z" fill="#b8b8b8"/><path d="M703.0 426.9 Q706.0 436.0 721.8 437.8 Z" fill="#d8d8d8"/><path d="M726.4 437.8 Q726.9 449.1 743.6 450.3 Q737.3 434.8 726.4 437.8 Z" fill="#676767"/><path d="M726.4 437.8 Q726.9 449.1 743.6 450.3 Z" fill="#878787"/><path d="M724.9 439.4 Q715.3 449.2 726.4 467.5 Q735.5 448.1 724.9 439.4 Z" fill="#d8d8d8"/><path d="M724.9 439.4 Q715.3 449.2 726.4 467.5 Z" fill="#f8f8f8"/><path d="M728.0 439.4 Q722.4 451.4 738.9 462.8 Q740.8 442.8 728.0 439.4 Z" fill="#c8c8c8"/><path d="M728.0 439.4 Q722.4 451.4 738.9 462.8 Z" fill="#e8e8e8"/><path d="M628.0 415.9 Q624.7 427.2 638.9 440.9 Q638.6 421.1 628.0 415.9 Z" fill="#676767"/><path d="M628.0 415.9 Q624.7 427.2 638.9 440.9 Z" fill="#878787"/><path d="M638.9 423.8 Q633.9 430.4 640.5 442.5 Q645.0 429.5 638.9 423.8 Z" fill="#a8a8a8"/><path d="M638.9 423.8 Q633.9 430.4 640.5 442.5 Z" fill="#c8c8c8"/><path d="M667.1 462.8 Q658.7 450.8 635.8 456.6 Q654.8 470.7 667.1 462.8 Z" fill="#787878"/><path d="M667.1 462.8 Q658.7 450.8 635.8 456.6 Z" fill="#989898"/><path d="M668.6 464.4 Q650.7 457.0 626.4 478.4 Q658.7 481.0 668.6 464.4 Z" fill="#898989"/><path d="M668.6 464.4 Q650.7 457.0 626.4 478.4 Z" fill="#a9a9a9"/><path d="M670.2 464.4 Q656.4 460.9 644.4 480.0 Q666.9 478.2 670.2 464.4 Z" fill="#b8b8b8"/><path d="M670.2 464.4 Q656.4 460.9 644.4 480.0 Z" fill="#d8d8d8"/><path d="M671.8 464.4 Q656.0 470.3 645.2 498.8 Q670.0 481.1 671.8 464.4 Z" fill="#9a9a9a"/><path d="M671.8 464.4 Q656.0 470.3 645.2 498.8 Z" fill="#bababa"/><path d="M660.8 480.0 Q660.0 487.0 670.2 489.4 Q667.8 479.2 660.8 480.0 Z" fill="#898989"/><path d="M660.8 480.0 Q660.0 487.0 670.2 489.4 Z" fill="#a9a9a9"/><path d="M687.4 487.8 Q673.2 481.0 662.4 501.1 Q685.1 503.4 687.4 487.8 Z" fill="#b8b8b8"/><path d="M687.4 487.8 Q673.2 481.0 662.4 501.1 Z" fill="#d8d8d8"/><path d="M699.9 476.9 Q700.3 484.7 712.4 487.8 Q707.7 476.3 699.9 476.9 Z" fill="#b8b8b8"/><path d="M699.9 476.9 Q700.3 484.7 712.4 487.8 Z" fill="#d8d8d8"/><path d="M737.4 487.8 Q732.9 488.5 731.1 495.6 Q737.7 492.3 737.4 487.8 Z" fill="#b0b0b0"/><path d="M737.4 487.8 Q732.9 488.5 731.1 495.6 Z" fill="#d0d0d0"/><path d="M636.6 413.6 L654.6 409.7 L668.6 403.4 L679.6 397.2 L684.2 396.4 L685.0 401.9 L681.1 409.7 L671.8 415.9 L665.5 418.3 L654.6 415.2 Z" fill="#e9e9e9"/><path d="M665.5 418.3 L671.8 415.9 L681.1 409.7 L682.7 417.5 L662.4 420.9 Z" fill="#cfcfcf"/><path d="M659.2 505.6 Q673.7 512.0 684.2 491.6 Q661.3 490.0 659.2 505.6 Z" fill="#cccccc"/><path d="M659.2 505.6 Q673.7 512.0 684.2 491.6 Z" fill="#ececec"/><path d="M659.2 507.2 Q669.4 513.7 687.4 504.1 Q667.7 498.6 659.2 507.2 Z" fill="#b8b8b8"/><path d="M659.2 507.2 Q669.4 513.7 687.4 504.1 Z" fill="#d8d8d8"/><path d="M657.7 511.9 Q645.0 522.2 657.7 543.1 Q670.3 522.2 657.7 511.9 Z" fill="#cccccc"/><path d="M657.7 511.9 Q645.0 522.2 657.7 543.1 Z" fill="#ececec"/><path d="M660.8 513.4 Q657.7 528.7 679.6 533.8 Q676.3 511.6 660.8 513.4 Z" fill="#b8b8b8"/><path d="M660.8 513.4 Q657.7 528.7 679.6 533.8 Z" fill="#d8d8d8"/><path d="M662.4 521.2 Q660.8 532.3 676.4 541.6 Q673.3 523.6 662.4 521.2 Z" fill="#d8d8d8"/><path d="M662.4 521.2 Q660.8 532.3 676.4 541.6 Z" fill="#f8f8f8"/><path d="M728.0 497.8 Q714.2 491.5 695.2 508.0 Q720.2 510.8 728.0 497.8 Z" fill="#cccccc"/><path d="M728.0 497.8 Q714.2 491.5 695.2 508.0 Z" fill="#ececec"/><path d="M728.0 500.9 Q716.1 508.0 721.8 529.1 Q735.8 512.4 728.0 500.9 Z" fill="#787878"/><path d="M728.0 500.9 Q716.1 508.0 721.8 529.1 Z" fill="#989898"/><path d="M731.1 499.4 Q721.3 507.7 731.9 523.6 Q741.5 507.0 731.1 499.4 Z" fill="#b8b8b8"/><path d="M731.1 499.4 Q721.3 507.7 731.9 523.6 Z" fill="#d8d8d8"/><path d="M735.8 499.4 Q727.4 510.8 740.5 529.1 Q747.4 507.6 735.8 499.4 Z" fill="#898989"/><path d="M735.8 499.4 Q727.4 510.8 740.5 529.1 Z" fill="#a9a9a9"/><path d="M732.7 496.2 Q736.3 495.7 737.4 490.0 Q732.2 492.7 732.7 496.2 Z" fill="#b8b8b8"/><path d="M732.7 496.2 Q736.3 495.7 737.4 490.0 Z" fill="#d8d8d8"/><path d="M682.7 538.4 Q687.4 547.0 704.6 550.9 Q692.4 538.2 682.7 538.4 Z" fill="#cccccc"/><path d="M682.7 538.4 Q687.4 547.0 704.6 550.9 Z" fill="#ececec"/><path d="M701.4 540.0 Q699.1 544.6 704.6 550.9 Q705.9 542.6 701.4 540.0 Z" fill="#cdcdcd"/><path d="M701.4 540.0 Q699.1 544.6 704.6 550.9 Z" fill="#ededed"/><path d="M665.5 574.4 Q670.0 570.2 667.1 560.3 Q662.0 569.3 665.5 574.4 Z" fill="#7a7a7a"/><path d="M665.5 574.4 Q670.0 570.2 667.1 560.3 Z" fill="#9a9a9a"/><path d="M665.5 575.2 Q664.1 569.4 654.6 568.1 Q659.7 576.2 665.5 575.2 Z" fill="#808080"/><path d="M665.5 575.2 Q664.1 569.4 654.6 568.1 Z" fill="#a0a0a0"/><path d="M668.6 575.2 Q673.9 575.8 676.4 568.1 Q668.5 569.8 668.6 575.2 Z" fill="#8a8a8a"/><path d="M668.6 575.2 Q673.9 575.8 676.4 568.1 Z" fill="#aaaaaa"/><path d="M710.8 590.0 Q715.3 584.3 709.2 574.4 Q705.3 585.3 710.8 590.0 Z" fill="#8c8c8c"/><path d="M710.8 590.0 Q715.3 584.3 709.2 574.4 Z" fill="#acacac"/><path d="M710.8 590.0 Q710.6 582.9 699.9 577.5 Q703.8 588.9 710.8 590.0 Z" fill="#949494"/><path d="M710.8 590.0 Q710.6 582.9 699.9 577.5 Z" fill="#b4b4b4"/><path d="M712.4 590.0 Q718.0 594.5 728.0 588.4 Q717.0 584.4 712.4 590.0 Z" fill="#7c7c7c"/><path d="M712.4 590.0 Q718.0 594.5 728.0 588.4 Z" fill="#9c9c9c"/><path d="M710.8 591.6 Q704.5 586.0 690.5 590.0 Q703.7 596.1 710.8 591.6 Z" fill="#8a8a8a"/><path d="M710.8 591.6 Q704.5 586.0 690.5 590.0 Z" fill="#aaaaaa"/><path d="M655.3 508.8 L645.2 510.3 L639.2 516.6 L638.2 524.4 L641.3 532.2" fill="none" stroke="#a8a8a8" stroke-width="2.2" stroke-linecap="round" stroke-linejoin="round"/><path d="M618.6 599.4 L631.1 591.6 L643.6 593.1 L654.6 602.5 L668.6 599.4 L684.2 602.5 L696.8 599.4 L712.4 604.1 L728.0 602.5 L744.4 610.0 L618.6 610.0 Z" fill="#e6e6e6" opacity=".9"/><path d="M649.9 590.0 L662.4 582.2 L676.4 583.8 L684.2 591.6 L676.4 599.4 L662.4 602.5 L653.0 597.8 Z" fill="#b4b4b4" opacity=".8"/><path d="M656.1 591.6 L665.5 586.9 L676.4 588.4 L679.6 593.1 L671.8 597.8 L660.8 597.8 Z" fill="#d0d0d0" opacity=".9"/></g></svg>
<div class="r" style="left:1071px;top:95px;width:17px;height:590px;background:#f0f0f0;"></div>
<div class="r" style="left:1072px;top:112px;width:15px;height:556px;background:#cdcdcd;"></div>
<svg style="left:1071px;top:97px" width="17" height="12" viewBox="0 0 17 12"><path d="M4.5 8.5 L8.5 4.5 L12.5 8.5" stroke="#505050" stroke-width="2.3" fill="none"/></svg>
<svg style="left:1071px;top:670px" width="17" height="12" viewBox="0 0 17 12"><path d="M4.5 3.5 L8.5 7.5 L12.5 3.5" stroke="#505050" stroke-width="2.3" fill="none"/></svg>
<div class="r" style="left:277px;top:685px;width:811px;height:19px;background:#f0f0f0;"></div>
<div class="r" style="left:316px;top:686px;width:738px;height:15px;background:#cdcdcd;"></div>
<svg style="left:300px;top:686px" width="14" height="16" viewBox="0 0 14 16"><path d="M9 3.5 L5 7.5 L9 11.5" stroke="#505050" stroke-width="2.3" fill="none"/></svg>
<svg style="left:1056px;top:686px" width="14" height="16" viewBox="0 0 14 16"><path d="M5 3.5 L9 7.5 L5 11.5" stroke="#505050" stroke-width="2.3" fill="none"/></svg>
<div class="r" style="left:278px;top:685px;width:19px;height:17px;background:#f0f0f0;box-sizing:border-box;border:1px solid #a0a0a0;border-top-color:#fff;border-left-color:#fff;"></div>
<svg style="left:278px;top:685px" width="19" height="17" viewBox="0 0 19 17"><path d="M6.5 5 V7 M6.5 9 V11" stroke="#000" stroke-width="1.4"/><path d="M9 4 L13 8 L9 12 Z" fill="#000"/></svg>
<div class="r" style="left:277px;top:705px;width:811px;height:1px;background:#a9a9a9;"></div>
<div class="r" style="left:277px;top:706px;width:811px;height:1px;background:#fff;"></div>
<div class="r" style="left:277px;top:746px;width:811px;height:1px;background:#fff;"></div>
<div class="r" style="left:298px;top:723px;width:26px;height:21px;background:#000;"></div>
<div class="r" style="left:283px;top:711px;width:25px;height:20px;background:#fff;box-sizing:border-box;border:1px solid #444;box-shadow:1px 1px 0 #ddd;"></div>
<svg style="left:310px;top:710px" width="13" height="11" viewBox="0 0 13 11"><rect x="1.5" y="1.5" width="7" height="5" rx="2" fill="#fff" stroke="#000" stroke-width="1.1"/><rect x="4.5" y="4" width="7" height="5" rx="2" fill="none" stroke="#000" stroke-width="1.1"/></svg>
<div class="r" style="left:333px;top:712px;width:30px;height:30px;background:#ffffff;box-sizing:border-box;border:1px solid #222;box-shadow:1px 1px 0 #8c8c8c;"></div>
<div class="r" style="left:368px;top:712px;width:30px;height:30px;background:#000000;box-sizing:border-box;border:1px solid #222;box-shadow:1px 1px 0 #8c8c8c;"></div>
<div class="r" style="left:403px;top:712px;width:30px;height:30px;background:#00ffff;box-sizing:border-box;border:1px solid #222;box-shadow:1px 1px 0 #8c8c8c;"></div>
<div class="r" style="left:438px;top:712px;width:30px;height:30px;background:#3344dd;box-sizing:border-box;border:1px solid #222;box-shadow:1px 1px 0 #8c8c8c;"></div>
<div class="r" style="left:473px;top:712px;width:30px;height:30px;background:#55bb55;box-sizing:border-box;border:1px solid #222;box-shadow:1px 1px 0 #8c8c8c;"></div>
<div class="r" style="left:508px;top:712px;width:30px;height:30px;background:#dd1122;box-sizing:border-box;border:1px solid #222;box-shadow:1px 1px 0 #8c8c8c;"></div>
<div class="r" style="left:543px;top:712px;width:30px;height:30px;background:#a030e0;box-sizing:border-box;border:1px solid #222;box-shadow:1px 1px 0 #8c8c8c;"></div>
<div class="r" style="left:578px;top:712px;width:30px;height:30px;background:#ffff80;box-sizing:border-box;border:1px solid #222;box-shadow:1px 1px 0 #8c8c8c;"></div>
<div class="r" style="left:613px;top:712px;width:30px;height:30px;background:#aa9933;box-sizing:border-box;border:1px solid #222;box-shadow:1px 1px 0 #8c8c8c;"></div>
<div class="r" style="left:648px;top:712px;width:30px;height:30px;background:#ffcc11;box-sizing:border-box;border:1px solid #222;box-shadow:1px 1px 0 #8c8c8c;"></div>
<div class="r" style="left:683px;top:712px;width:30px;height:30px;background:#060606;box-sizing:border-box;border:1px solid #222;box-shadow:1px 1px 0 #8c8c8c;"></div>
<div class="r" style="left:718px;top:712px;width:30px;height:30px;background:#060606;box-sizing:border-box;border:1px solid #222;box-shadow:1px 1px 0 #8c8c8c;"></div>
<div class="r" style="left:753px;top:712px;width:30px;height:30px;background:#060606;box-sizing:border-box;border:1px solid #222;box-shadow:1px 1px 0 #8c8c8c;"></div>
<div class="r" style="left:788px;top:712px;width:30px;height:30px;background:#060606;box-sizing:border-box;border:1px solid #222;box-shadow:1px 1px 0 #8c8c8c;"></div>
<div class="r" style="left:823px;top:712px;width:30px;height:30px;background:#060606;box-sizing:border-box;border:1px solid #222;box-shadow:1px 1px 0 #8c8c8c;"></div>
<div class="r" style="left:858px;top:712px;width:30px;height:30px;background:#060606;box-sizing:border-box;border:1px solid #222;box-shadow:1px 1px 0 #8c8c8c;"></div>
<div class="r" style="left:893px;top:712px;width:30px;height:30px;background:#060606;box-sizing:border-box;border:1px solid #222;box-shadow:1px 1px 0 #8c8c8c;"></div>
<div class="r" style="left:928px;top:712px;width:30px;height:30px;background:#060606;box-sizing:border-box;border:1px solid #222;box-shadow:1px 1px 0 #8c8c8c;"></div>
<div class="r" style="left:963px;top:712px;width:30px;height:30px;background:#060606;box-sizing:border-box;border:1px solid #222;box-shadow:1px 1px 0 #8c8c8c;"></div>
<div class="r" style="left:998px;top:712px;width:30px;height:30px;background:#060606;box-sizing:border-box;border:1px solid #222;box-shadow:1px 1px 0 #8c8c8c;"></div>
<div class="r" style="left:1033px;top:712px;width:30px;height:30px;background:#060606;box-sizing:border-box;border:1px solid #222;box-shadow:1px 1px 0 #8c8c8c;"></div>
<svg style="left:1072px;top:710px" width="14" height="12" viewBox="0 0 14 12"><path d="M3 8 L7 4 L11 8" stroke="#505050" stroke-width="2.3" fill="none"/></svg>
<svg style="left:1072px;top:732px" width="14" height="12" viewBox="0 0 14 12"><path d="M3 4 L7 8 L11 4" stroke="#505050" stroke-width="2.3" fill="none"/></svg>
<div class="r" style="left:1102px;top:45px;width:243px;height:15px;background:#365a8e;"></div>
<span class="t" style="left:1106px;top:47.00px;font-size:12.5px;font-weight:700;color:#fff;font-style:normal;letter-spacing:-0.25px;">Vectors</span>
<div class="r" style="left:1327px;top:46px;width:13px;height:14px;background:#c3cbd9;box-shadow:inset 1px 1px 0 #eef0f4, inset -1px -1px 0 #5a6a86;"></div><svg style="left:1327px;top:46px" width="13" height="14" viewBox="0 0 13 14"><path d="M6.5 3 L10 11 L3 11 Z" fill="#404040"/></svg>
<div class="r" style="left:1102px;top:172px;width:243px;height:15px;background:#365a8e;"></div>
<span class="t" style="left:1106px;top:174.00px;font-size:12.5px;font-weight:700;color:#fff;font-style:normal;letter-spacing:-0.25px;">Bitmaps</span>
<div class="r" style="left:1327px;top:173px;width:13px;height:14px;background:#c3cbd9;box-shadow:inset 1px 1px 0 #eef0f4, inset -1px -1px 0 #5a6a86;"></div><svg style="left:1327px;top:173px" width="13" height="14" viewBox="0 0 13 14"><path d="M6.5 3 L10 11 L3 11 Z" fill="#404040"/></svg>
<div class="r" style="left:1102px;top:253px;width:243px;height:15px;background:#365a8e;"></div>
<span class="t" style="left:1106px;top:255.00px;font-size:12.5px;font-weight:700;color:#fff;font-style:normal;letter-spacing:-0.25px;">Reliefs</span>
<div class="r" style="left:1327px;top:254px;width:13px;height:14px;background:#c3cbd9;box-shadow:inset 1px 1px 0 #eef0f4, inset -1px -1px 0 #5a6a86;"></div><svg style="left:1327px;top:254px" width="13" height="14" viewBox="0 0 13 14"><path d="M6.5 3 L10 11 L3 11 Z" fill="#404040"/></svg>
<div class="r" style="left:1103px;top:62px;width:239px;height:22px;background:#fff;box-sizing:border-box;border:1px solid #7a7a7a;border-top:2px solid #6e6e6e;border-left:2px solid #6e6e6e;border-right:1px solid #ddd;border-bottom:1px solid #ddd;"></div>
<span class="t" style="left:1105px;top:65.00px;font-size:12px;font-weight:400;color:#000;font-style:normal;">Default Sheet</span>
<div class="r" style="left:1325px;top:65px;width:16px;height:18px;background:#ececec;box-sizing:border-box;border:1px solid #fff;border-right:2px solid #6a6a6a;border-bottom:2px solid #6a6a6a;"></div>
<svg style="left:1325px;top:65px" width="16" height="18" viewBox="0 0 16 18"><path d="M4 7 H11 L7.5 10.5 Z" fill="#000"/></svg>
<div class="r" style="left:1103px;top:270px;width:239px;height:22px;background:#fff;box-sizing:border-box;border:1px solid #7a7a7a;border-top:2px solid #6e6e6e;border-left:2px solid #6e6e6e;border-right:1px solid #ddd;border-bottom:1px solid #ddd;"></div>
<span class="t" style="left:1105px;top:273.00px;font-size:12px;font-weight:400;color:#000;font-style:normal;">Front Relief</span>
<div class="r" style="left:1325px;top:273px;width:16px;height:18px;background:#ececec;box-sizing:border-box;border:1px solid #fff;border-right:2px solid #6a6a6a;border-bottom:2px solid #6a6a6a;"></div>
<svg style="left:1325px;top:273px" width="16" height="18" viewBox="0 0 16 18"><path d="M4 7 H11 L7.5 10.5 Z" fill="#000"/></svg>
<div class="r" style="left:1102px;top:112px;width:243px;height:26px;background:#d9d9d9;"></div>
<div class="r" style="left:1102px;top:213px;width:243px;height:24px;background:#d9d9d9;"></div>
<div class="r" style="left:1102px;top:320px;width:243px;height:25px;background:#d9d9d9;"></div>
<span class="t" style="left:1128px;top:120.00px;font-size:12px;font-weight:400;color:#000;font-style:normal;">Default Layer</span>
<span class="t" style="left:1128px;top:219.00px;font-size:12px;font-weight:400;color:#000;font-style:normal;">Bitmap Layer 1</span>
<span class="t" style="left:1149px;top:328.00px;font-size:12px;font-weight:400;color:#000;font-style:normal;">Relief Layer 1</span>
<svg style="left:1137px;top:328px" width="8" height="10" viewBox="0 0 8 10"><path d="M2 1.5 L6 5 L2 8.5 Z" fill="#000"/></svg>
<svg style="left:1103px;top:90px" width="16" height="17" viewBox="0 0 16 17"><defs><linearGradient id="gdn" x1="0" y1="0" x2="1" y2="0"><stop offset="0" stop-color="#8da3c4"/><stop offset=".55" stop-color="#c8d3e4"/><stop offset="1" stop-color="#8fa5c6"/></linearGradient></defs><path d="M8 12 L15 12 L12 16.5 H3 Z" fill="#bcbcbc"/><path d="M1 1 H6.5 L10 5 V15.5 H1 Z" fill="url(#gdn)"/><path d="M6.5 1 L10 5 H6.5 Z" fill="#eef2f8"/></svg>
<svg style="left:1139px;top:91px" width="18" height="15" viewBox="0 0 18 15"><path d="M12 11 L17 8 L15 13.5 H6 Z" fill="#cfcfcf"/><path d="M1 4 L2 2 L7 1 L8.5 2.5 L13 2.5 L13.5 8 L2 13 Z" fill="#f8ee3c"/><path d="M2 13.3 L4 8.3 L16.5 6.8 L14 12.5 L4 14 Z" fill="#f0de18"/><path d="M4.5 9 L15.5 7.5" stroke="#fdf68a" stroke-width=".8"/></svg>
<svg style="left:1176px;top:91px" width="17" height="15" viewBox="0 0 17 15"><path d="M13 10 L16.5 9.5 L15 13.5 H6 Z" fill="#c6c6c6"/><path d="M1 1 H13.5 V13.5 H2.5 L1 12 Z" fill="#2457bd"/><rect x="3" y="1.8" width="8.5" height="5.8" fill="#e6e6ea"/><rect x="3" y="1.8" width="8.5" height="2" fill="#c6c8d2"/><rect x="4" y="9.3" width="7" height="4.2" fill="#d7d9df"/><rect x="5" y="10" width="2" height="3.5" fill="#2457bd"/></svg>
<svg style="left:1212px;top:90px" width="18" height="17" viewBox="0 0 18 17"><path d="M11 13 L17 12.5 L15 16.5 H6 Z" fill="#cdcdcd"/><path d="M1.5 1 H8 L9.5 3 V11.5 H1.5 Z" fill="#c2a378"/><path d="M4.5 3.5 H11 L13.5 6.5 V15.5 H4.5 Z" fill="#b8976a"/><path d="M1.5 1 V11.5 M4.5 3.5 V15.5" stroke="#a98a5e" stroke-width=".8" stroke-dasharray="1.2 1"/><path d="M6 8 H12 M6 10.5 H12 M6 13 H12" stroke="#a68658" stroke-width=".8"/></svg>
<svg style="left:1251px;top:90px" width="14" height="18" viewBox="0 0 14 18"><defs><linearGradient id="gbd" x1="0" x2="1"><stop offset="0" stop-color="#7f93b2"/><stop offset=".5" stop-color="#c0cbdc"/><stop offset="1" stop-color="#8396b4"/></linearGradient></defs><path d="M1 1.5 H8 L11.5 5 V16.5 H1 Z" fill="url(#gbd)"/><path d="M8 1.5 L11.5 5 H8 Z" fill="#eef2f8"/><g transform="translate(6.3,9.5) scale(0.92)"><path d="M-1.8 3.5 H1.8 V6.6 H-1.8 Z" fill="#3a2a14"/><path d="M-2 3.8 H2" stroke="#8a6a2a" stroke-width=".7"/><path d="M0 -5 C3.4 -5 4.6 -2.6 4.6 -0.8 C4.6 1.4 2.6 2.4 2.2 4.2 H-2.2 C-2.6 2.4 -4.6 1.4 -4.6 -0.8 C-4.6 -2.6 -3.4 -5 0 -5 Z" fill="#f8d648"/><path d="M-1 -4.2 C-3 -3.6 -3.6 -1.8 -3.2 -0.4 C-2.4 -1.4 -1.8 -3 -1 -4.2 Z" fill="#fff6c0"/><path d="M1.2 -3.8 C3.6 -2.4 3.8 0.4 2 2.6 C2.4 0.6 2.6 -1.8 1.2 -3.8 Z" fill="#e0a820"/></g></svg>
<svg style="left:1289px;top:92px" width="12" height="14" viewBox="0 0 12 14"><path d="M1.5 3.5 H10.5 L9.5 12.5 C8 13.6 4 13.6 2.5 12.5 Z" fill="#4a80e0"/><path d="M1.5 3.5 H4 L4.2 13 C3.4 12.9 2.9 12.8 2.5 12.5 Z" fill="#2c5cc0"/><ellipse cx="6" cy="3.3" rx="5" ry="2" fill="#9cc0f4" stroke="#3c6cd0" stroke-width=".8"/><ellipse cx="6" cy="3.2" rx="2.6" ry=".9" fill="#e8f0fc"/></svg>
<svg style="left:1323px;top:90px" width="18" height="18" viewBox="0 0 18 18"><rect x="0.5" y="0.5" width="17" height="17" fill="#fbfbf4" stroke="#e2e2e2" stroke-width=".8"/><path d="M0.5 17.5 V0.5 H17.5" fill="none" stroke="#b9b9b9" stroke-width=".8"/><g transform="translate(6,8.5) scale(1.0)"><path d="M-1.8 3.5 H1.8 V6.6 H-1.8 Z" fill="#3a2a14"/><path d="M-2 3.8 H2" stroke="#8a6a2a" stroke-width=".7"/><path d="M0 -5 C3.4 -5 4.6 -2.6 4.6 -0.8 C4.6 1.4 2.6 2.4 2.2 4.2 H-2.2 C-2.6 2.4 -4.6 1.4 -4.6 -0.8 C-4.6 -2.6 -3.4 -5 0 -5 Z" fill="#f8d648"/><path d="M-1 -4.2 C-3 -3.6 -3.6 -1.8 -3.2 -0.4 C-2.4 -1.4 -1.8 -3 -1 -4.2 Z" fill="#fff6c0"/><path d="M1.2 -3.8 C3.6 -2.4 3.8 0.4 2 2.6 C2.4 0.6 2.6 -1.8 1.2 -3.8 Z" fill="#e0a820"/></g><g transform="translate(12.5,6.5) scale(1.0)"><path d="M-1.8 3.5 H1.8 V6.6 H-1.8 Z" fill="#3a2a14"/><path d="M-2 3.8 H2" stroke="#8a6a2a" stroke-width=".7"/><path d="M0 -5 C3.4 -5 4.6 -2.6 4.6 -0.8 C4.6 1.4 2.6 2.4 2.2 4.2 H-2.2 C-2.6 2.4 -4.6 1.4 -4.6 -0.8 C-4.6 -2.6 -3.4 -5 0 -5 Z" fill="#f8d648"/><path d="M-1 -4.2 C-3 -3.6 -3.6 -1.8 -3.2 -0.4 C-2.4 -1.4 -1.8 -3 -1 -4.2 Z" fill="#fff6c0"/><path d="M1.2 -3.8 C3.6 -2.4 3.8 0.4 2 2.6 C2.4 0.6 2.6 -1.8 1.2 -3.8 Z" fill="#e0a820"/></g></svg>
<div class="r" style="left:1106px;top:117px;width:17px;height:17px;background:#e9e9e9;box-sizing:border-box;border:1px solid #fff;border-right-color:#9a9a9a;border-bottom-color:#9a9a9a;"></div>
<svg style="left:1106px;top:117px" width="17" height="17" viewBox="0 0 17 17"><circle cx="8.5" cy="8.5" r="6.3" fill="#000"/></svg>
<div class="r" style="left:1287px;top:117px;width:17px;height:17px;background:#d0d0d0;box-sizing:border-box;border:1px solid #fff;border-right-color:#9a9a9a;border-bottom-color:#9a9a9a;"></div>
<svg style="left:1287px;top:117px" width="17" height="17" viewBox="0 0 17 17"><defs><linearGradient id="glk" x1="0" y1="0" x2="1" y2="1"><stop offset="0" stop-color="#f0f0f0"/><stop offset="1" stop-color="#9c9c9c"/></linearGradient></defs><rect x="1" y="1" width="15" height="15" fill="url(#glk)"/><path d="M6 8 V5.5 C6 2.5 11.5 2.5 11.5 5.5" fill="none" stroke="#f6f6f6" stroke-width="1.6"/><rect x="5" y="8" width="8.5" height="7" fill="#b2b2b2"/><path d="M9 14.5 V10.5 M7.3 12 L9 10 L10.7 12" stroke="#111" stroke-width="1.3" fill="none"/></svg>
<div class="r" style="left:1305px;top:117px;width:17px;height:17px;background:#dedede;box-sizing:border-box;border:1px solid #b0b0b0;border-right-color:#f4f4f4;border-bottom-color:#f4f4f4;"></div>
<svg style="left:1305px;top:117px" width="17" height="17" viewBox="0 0 17 17"><path d="M2.5 2 V15 M2.5 14.5 H15.5" stroke="#000" stroke-width="1" stroke-dasharray="1.5 1"/><path d="M14.5 2.5 L8 9" stroke="#000" stroke-width="2.2"/><path d="M4.5 12.5 L6 6.5 L10.5 11 Z" fill="#000"/></svg>
<div class="r" style="left:1323px;top:117px;width:17px;height:17px;background:#d2d2d2;box-sizing:border-box;border:1px solid #c4c4c4;"></div>
<svg style="left:1323px;top:117px" width="17" height="17" viewBox="0 0 17 17"><rect x="1" y="1" width="15" height="15" fill="#dedbd0"/><g transform="translate(8.5,7.5) scale(1.1)"><path d="M-1.8 3.5 H1.8 V6.6 H-1.8 Z" fill="#3a2a14"/><path d="M-2 3.8 H2" stroke="#8a6a2a" stroke-width=".7"/><path d="M0 -5 C3.4 -5 4.6 -2.6 4.6 -0.8 C4.6 1.4 2.6 2.4 2.2 4.2 H-2.2 C-2.6 2.4 -4.6 1.4 -4.6 -0.8 C-4.6 -2.6 -3.4 -5 0 -5 Z" fill="#f8d648"/><path d="M-1 -4.2 C-3 -3.6 -3.6 -1.8 -3.2 -0.4 C-2.4 -1.4 -1.8 -3 -1 -4.2 Z" fill="#fff6c0"/><path d="M1.2 -3.8 C3.6 -2.4 3.8 0.4 2 2.6 C2.4 0.6 2.6 -1.8 1.2 -3.8 Z" fill="#e0a820"/></g></svg>
<svg style="left:1312px;top:141px" width="12" height="12" viewBox="0 0 12 12"><defs><linearGradient id="gud" x1="0" y1="0" x2="0" y2="1"><stop offset="0" stop-color="#2c5cc0"/><stop offset="1" stop-color="#123a86"/></linearGradient></defs><rect x="0" y="0" width="12" height="12" rx="1" fill="url(#gud)"/><path d="M6 9.8 V3.4 M3 6 L6 2.8 L9 6" stroke="#fff" stroke-width="1.9" fill="none"/></svg><svg style="left:1330px;top:141px" width="12" height="12" viewBox="0 0 12 12"><defs><linearGradient id="gud" x1="0" y1="0" x2="0" y2="1"><stop offset="0" stop-color="#2c5cc0"/><stop offset="1" stop-color="#123a86"/></linearGradient></defs><rect x="0" y="0" width="12" height="12" rx="1" fill="url(#gud)"/><path d="M6 2.2 V8.6 M3 6 L6 9.2 L9 6" stroke="#fff" stroke-width="1.9" fill="none"/></svg>
<svg style="left:1103px;top:191px" width="16" height="17" viewBox="0 0 16 17"><defs><linearGradient id="gdn" x1="0" y1="0" x2="1" y2="0"><stop offset="0" stop-color="#8da3c4"/><stop offset=".55" stop-color="#c8d3e4"/><stop offset="1" stop-color="#8fa5c6"/></linearGradient></defs><path d="M8 12 L15 12 L12 16.5 H3 Z" fill="#bcbcbc"/><path d="M1 1 H6.5 L10 5 V15.5 H1 Z" fill="url(#gdn)"/><path d="M6.5 1 L10 5 H6.5 Z" fill="#eef2f8"/></svg>
<svg style="left:1135px;top:192px" width="18" height="15" viewBox="0 0 18 15"><path d="M12 11 L17 8 L15 13.5 H6 Z" fill="#cfcfcf"/><path d="M1 4 L2 2 L7 1 L8.5 2.5 L13 2.5 L13.5 8 L2 13 Z" fill="#f8ee3c"/><path d="M2 13.3 L4 8.3 L16.5 6.8 L14 12.5 L4 14 Z" fill="#f0de18"/><path d="M4.5 9 L15.5 7.5" stroke="#fdf68a" stroke-width=".8"/></svg>
<svg style="left:1166px;top:192px" width="17" height="15" viewBox="0 0 17 15"><path d="M13 10 L16.5 9.5 L15 13.5 H6 Z" fill="#c6c6c6"/><path d="M1 1 H13.5 V13.5 H2.5 L1 12 Z" fill="#2457bd"/><rect x="3" y="1.8" width="8.5" height="5.8" fill="#e6e6ea"/><rect x="3" y="1.8" width="8.5" height="2" fill="#c6c8d2"/><rect x="4" y="9.3" width="7" height="4.2" fill="#d7d9df"/><rect x="5" y="10" width="2" height="3.5" fill="#2457bd"/></svg>
<svg style="left:1197px;top:191px" width="18" height="17" viewBox="0 0 18 17"><path d="M11 13 L17 12.5 L15 16.5 H6 Z" fill="#cdcdcd"/><path d="M1.5 1 H8 L9.5 3 V11.5 H1.5 Z" fill="#c2a378"/><path d="M4.5 3.5 H11 L13.5 6.5 V15.5 H4.5 Z" fill="#b8976a"/><path d="M1.5 1 V11.5 M4.5 3.5 V15.5" stroke="#a98a5e" stroke-width=".8" stroke-dasharray="1.2 1"/><path d="M6 8 H12 M6 10.5 H12 M6 13 H12" stroke="#a68658" stroke-width=".8"/></svg>
<svg style="left:1230px;top:191px" width="16" height="17" viewBox="0 0 16 17"><defs><linearGradient id="ggd" x1="0" y1="0" x2="1" y2="1"><stop offset="0" stop-color="#9c9c9c"/><stop offset="1" stop-color="#f4f4f4"/></linearGradient></defs><path d="M10 11 L15.5 10.5 L13 16 H5 Z" fill="#c4c4c4"/><path d="M1 1 H11.5 V14.5 H1 Z" fill="url(#ggd)"/></svg>
<svg style="left:1266px;top:197px" width="12" height="11" viewBox="0 0 12 11"><path d="M2 0.5 H9 L11.5 10.5 H0.5 Z" fill="#7f86cc"/><path d="M0.5 10.5 H11.5 V8.5 H1 Z" fill="#5a60b0"/></svg><svg style="left:1261px;top:192px" width="10" height="11" viewBox="0 0 16 16"><rect x="0" y="0" width="16" height="16" fill="#6a6428"/><rect x="0" y="0" width="16" height="6" fill="#9a9450"/><path d="M2 16 C2 10.5 5 9.5 8 9.5 C11 9.5 14 10.5 14 16 Z" fill="#1c1208"/><path d="M4 8 C3.6 1.6 12.4 1.6 12 8 L13 12 H3 Z" fill="#24160a"/><ellipse cx="8" cy="6" rx="2.4" ry="3" fill="#ecc482"/><path d="M6 9.8 H10 L10.8 12.5 H5.2 Z" fill="#e2b874"/><path d="M4.5 14 H11.5 V15.3 H4.5 Z" fill="#dcae6c"/></svg>
<svg style="left:1294px;top:193px" width="12" height="14" viewBox="0 0 12 14"><path d="M1.5 3.5 H10.5 L9.5 12.5 C8 13.6 4 13.6 2.5 12.5 Z" fill="#4a80e0"/><path d="M1.5 3.5 H4 L4.2 13 C3.4 12.9 2.9 12.8 2.5 12.5 Z" fill="#2c5cc0"/><ellipse cx="6" cy="3.3" rx="5" ry="2" fill="#9cc0f4" stroke="#3c6cd0" stroke-width=".8"/><ellipse cx="6" cy="3.2" rx="2.6" ry=".9" fill="#e8f0fc"/></svg>
<svg style="left:1323px;top:191px" width="18" height="18" viewBox="0 0 18 18"><rect x="0.5" y="0.5" width="17" height="17" fill="#fbfbf4" stroke="#e2e2e2" stroke-width=".8"/><path d="M0.5 17.5 V0.5 H17.5" fill="none" stroke="#b9b9b9" stroke-width=".8"/><g transform="translate(6,8.5) scale(1.0)"><path d="M-1.8 3.5 H1.8 V6.6 H-1.8 Z" fill="#3a2a14"/><path d="M-2 3.8 H2" stroke="#8a6a2a" stroke-width=".7"/><path d="M0 -5 C3.4 -5 4.6 -2.6 4.6 -0.8 C4.6 1.4 2.6 2.4 2.2 4.2 H-2.2 C-2.6 2.4 -4.6 1.4 -4.6 -0.8 C-4.6 -2.6 -3.4 -5 0 -5 Z" fill="#f8d648"/><path d="M-1 -4.2 C-3 -3.6 -3.6 -1.8 -3.2 -0.4 C-2.4 -1.4 -1.8 -3 -1 -4.2 Z" fill="#fff6c0"/><path d="M1.2 -3.8 C3.6 -2.4 3.8 0.4 2 2.6 C2.4 0.6 2.6 -1.8 1.2 -3.8 Z" fill="#e0a820"/></g><g transform="translate(12.5,6.5) scale(1.0)"><path d="M-1.8 3.5 H1.8 V6.6 H-1.8 Z" fill="#3a2a14"/><path d="M-2 3.8 H2" stroke="#8a6a2a" stroke-width=".7"/><path d="M0 -5 C3.4 -5 4.6 -2.6 4.6 -0.8 C4.6 1.4 2.6 2.4 2.2 4.2 H-2.2 C-2.6 2.4 -4.6 1.4 -4.6 -0.8 C-4.6 -2.6 -3.4 -5 0 -5 Z" fill="#f8d648"/><path d="M-1 -4.2 C-3 -3.6 -3.6 -1.8 -3.2 -0.4 C-2.4 -1.4 -1.8 -3 -1 -4.2 Z" fill="#fff6c0"/><path d="M1.2 -3.8 C3.6 -2.4 3.8 0.4 2 2.6 C2.4 0.6 2.6 -1.8 1.2 -3.8 Z" fill="#e0a820"/></g></svg>
<svg style="left:1106px;top:217px" width="16" height="16" viewBox="0 0 16 16"><rect x="0" y="0" width="16" height="16" fill="#6a6428"/><rect x="0" y="0" width="16" height="6" fill="#9a9450"/><path d="M2 16 C2 10.5 5 9.5 8 9.5 C11 9.5 14 10.5 14 16 Z" fill="#1c1208"/><path d="M4 8 C3.6 1.6 12.4 1.6 12 8 L13 12 H3 Z" fill="#24160a"/><ellipse cx="8" cy="6" rx="2.4" ry="3" fill="#ecc482"/><path d="M6 9.8 H10 L10.8 12.5 H5.2 Z" fill="#e2b874"/><path d="M4.5 14 H11.5 V15.3 H4.5 Z" fill="#dcae6c"/></svg>
<svg style="left:1103px;top:298px" width="16" height="17" viewBox="0 0 16 17"><defs><linearGradient id="gdn" x1="0" y1="0" x2="1" y2="0"><stop offset="0" stop-color="#8da3c4"/><stop offset=".55" stop-color="#c8d3e4"/><stop offset="1" stop-color="#8fa5c6"/></linearGradient></defs><path d="M8 12 L15 12 L12 16.5 H3 Z" fill="#bcbcbc"/><path d="M1 1 H6.5 L10 5 V15.5 H1 Z" fill="url(#gdn)"/><path d="M6.5 1 L10 5 H6.5 Z" fill="#eef2f8"/></svg>
<svg style="left:1130px;top:299px" width="18" height="15" viewBox="0 0 18 15"><path d="M12 11 L17 8 L15 13.5 H6 Z" fill="#cfcfcf"/><path d="M1 4 L2 2 L7 1 L8.5 2.5 L13 2.5 L13.5 8 L2 13 Z" fill="#f8ee3c"/><path d="M2 13.3 L4 8.3 L16.5 6.8 L14 12.5 L4 14 Z" fill="#f0de18"/><path d="M4.5 9 L15.5 7.5" stroke="#fdf68a" stroke-width=".8"/></svg>
<svg style="left:1158px;top:299px" width="17" height="15" viewBox="0 0 17 15"><path d="M13 10 L16.5 9.5 L15 13.5 H6 Z" fill="#c6c6c6"/><path d="M1 1 H13.5 V13.5 H2.5 L1 12 Z" fill="#2457bd"/><rect x="3" y="1.8" width="8.5" height="5.8" fill="#e6e6ea"/><rect x="3" y="1.8" width="8.5" height="2" fill="#c6c8d2"/><rect x="4" y="9.3" width="7" height="4.2" fill="#d7d9df"/><rect x="5" y="10" width="2" height="3.5" fill="#2457bd"/></svg>
<svg style="left:1185px;top:298px" width="18" height="17" viewBox="0 0 18 17"><path d="M11 13 L17 12.5 L15 16.5 H6 Z" fill="#cdcdcd"/><path d="M1.5 1 H8 L9.5 3 V11.5 H1.5 Z" fill="#c2a378"/><path d="M4.5 3.5 H11 L13.5 6.5 V15.5 H4.5 Z" fill="#b8976a"/><path d="M1.5 1 V11.5 M4.5 3.5 V15.5" stroke="#a98a5e" stroke-width=".8" stroke-dasharray="1.2 1"/><path d="M6 8 H12 M6 10.5 H12 M6 13 H12" stroke="#a68658" stroke-width=".8"/></svg>
<svg style="left:1212px;top:298px" width="18" height="17" viewBox="0 0 18 17"><path d="M1 11 L9 6.5 L17 11 L9 16 Z" fill="#a81414"/><path d="M4.5 11 L9 8.5 L13.5 11 L9 13.8 Z" fill="#f4c018"/><path d="M9 9 V12.5 M7.4 11.2 L9 13 L10.6 11.2" stroke="#a81414" stroke-width="1" fill="none"/><path d="M1.5 5.5 L9 1 L16.5 5.5 L9 10 Z" fill="#7c86d8"/><path d="M1.5 5.5 L9 1 L16.5 5.5" fill="none" stroke="#a4acec" stroke-width=".8"/></svg>
<svg style="left:1242px;top:298px" width="14" height="18" viewBox="0 0 14 18"><defs><linearGradient id="gbd" x1="0" x2="1"><stop offset="0" stop-color="#7f93b2"/><stop offset=".5" stop-color="#c0cbdc"/><stop offset="1" stop-color="#8396b4"/></linearGradient></defs><path d="M1 1.5 H8 L11.5 5 V16.5 H1 Z" fill="url(#gbd)"/><path d="M8 1.5 L11.5 5 H8 Z" fill="#eef2f8"/><g transform="translate(6.3,9.5) scale(0.92)"><path d="M-1.8 3.5 H1.8 V6.6 H-1.8 Z" fill="#3a2a14"/><path d="M-2 3.8 H2" stroke="#8a6a2a" stroke-width=".7"/><path d="M0 -5 C3.4 -5 4.6 -2.6 4.6 -0.8 C4.6 1.4 2.6 2.4 2.2 4.2 H-2.2 C-2.6 2.4 -4.6 1.4 -4.6 -0.8 C-4.6 -2.6 -3.4 -5 0 -5 Z" fill="#f8d648"/><path d="M-1 -4.2 C-3 -3.6 -3.6 -1.8 -3.2 -0.4 C-2.4 -1.4 -1.8 -3 -1 -4.2 Z" fill="#fff6c0"/><path d="M1.2 -3.8 C3.6 -2.4 3.8 0.4 2 2.6 C2.4 0.6 2.6 -1.8 1.2 -3.8 Z" fill="#e0a820"/></g></svg>
<svg style="left:1270px;top:299px" width="15" height="15" viewBox="0 0 15 15"><rect x="0" y="0" width="15" height="14.5" fill="#050505"/><circle cx="5" cy="3.4" r="1.4" fill="#bbb"/><circle cx="10" cy="3.4" r="1.4" fill="#bbb"/><ellipse cx="7.5" cy="4.8" rx="2.8" ry="2.3" fill="#d8d8d8"/><ellipse cx="7.5" cy="9.8" rx="4.2" ry="3.6" fill="#e4e4e4"/><ellipse cx="7.5" cy="10.2" rx="2.3" ry="2" fill="#8a8a8a"/><ellipse cx="3.2" cy="8" rx="1.2" ry="1.9" fill="#ccc" transform="rotate(25 3.2 8)"/><ellipse cx="11.8" cy="8" rx="1.2" ry="1.9" fill="#ccc" transform="rotate(-25 11.8 8)"/><ellipse cx="5" cy="13" rx="1.6" ry="1.1" fill="#ccc"/><ellipse cx="10" cy="13" rx="1.6" ry="1.1" fill="#ccc"/><path d="M1 2.5 H3 M2 2.5 V5 M12 2.5 H14 M13 2.5 V5" stroke="#ddd" stroke-width=".7"/></svg>
<svg style="left:1298px;top:300px" width="12" height="14" viewBox="0 0 12 14"><path d="M1.5 3.5 H10.5 L9.5 12.5 C8 13.6 4 13.6 2.5 12.5 Z" fill="#4a80e0"/><path d="M1.5 3.5 H4 L4.2 13 C3.4 12.9 2.9 12.8 2.5 12.5 Z" fill="#2c5cc0"/><ellipse cx="6" cy="3.3" rx="5" ry="2" fill="#9cc0f4" stroke="#3c6cd0" stroke-width=".8"/><ellipse cx="6" cy="3.2" rx="2.6" ry=".9" fill="#e8f0fc"/></svg>
<svg style="left:1323px;top:298px" width="18" height="18" viewBox="0 0 18 18"><rect x="0.5" y="0.5" width="17" height="17" fill="#fbfbf4" stroke="#e2e2e2" stroke-width=".8"/><path d="M0.5 17.5 V0.5 H17.5" fill="none" stroke="#b9b9b9" stroke-width=".8"/><g transform="translate(6,8.5) scale(1.0)"><path d="M-1.8 3.5 H1.8 V6.6 H-1.8 Z" fill="#3a2a14"/><path d="M-2 3.8 H2" stroke="#8a6a2a" stroke-width=".7"/><path d="M0 -5 C3.4 -5 4.6 -2.6 4.6 -0.8 C4.6 1.4 2.6 2.4 2.2 4.2 H-2.2 C-2.6 2.4 -4.6 1.4 -4.6 -0.8 C-4.6 -2.6 -3.4 -5 0 -5 Z" fill="#f8d648"/><path d="M-1 -4.2 C-3 -3.6 -3.6 -1.8 -3.2 -0.4 C-2.4 -1.4 -1.8 -3 -1 -4.2 Z" fill="#fff6c0"/><path d="M1.2 -3.8 C3.6 -2.4 3.8 0.4 2 2.6 C2.4 0.6 2.6 -1.8 1.2 -3.8 Z" fill="#e0a820"/></g><g transform="translate(12.5,6.5) scale(1.0)"><path d="M-1.8 3.5 H1.8 V6.6 H-1.8 Z" fill="#3a2a14"/><path d="M-2 3.8 H2" stroke="#8a6a2a" stroke-width=".7"/><path d="M0 -5 C3.4 -5 4.6 -2.6 4.6 -0.8 C4.6 1.4 2.6 2.4 2.2 4.2 H-2.2 C-2.6 2.4 -4.6 1.4 -4.6 -0.8 C-4.6 -2.6 -3.4 -5 0 -5 Z" fill="#f8d648"/><path d="M-1 -4.2 C-3 -3.6 -3.6 -1.8 -3.2 -0.4 C-2.4 -1.4 -1.8 -3 -1 -4.2 Z" fill="#fff6c0"/><path d="M1.2 -3.8 C3.6 -2.4 3.8 0.4 2 2.6 C2.4 0.6 2.6 -1.8 1.2 -3.8 Z" fill="#e0a820"/></g></svg>
<svg style="left:1110px;top:322px" width="24" height="24" viewBox="0 0 24 24"><path d="M2 12 C2 4 12 0 20 6 L22 11 C16 6.5 9 8 6.5 13.5 Z" fill="#d8c078"/><path d="M2 12 C2 4 12 0 20 6 C13 3.5 5.5 6 4 12.5 Z" fill="#f0e2a8"/><path d="M4 13 C5 7.5 12 5.5 17.5 9 L18 14 C14 12 9 12.5 7 15.5 Z" fill="#8e8cd4"/><path d="M20 6 L22 11 L18 14 L17.5 9 Z" fill="#b89c50"/><path d="M1.5 18.5 H8.5 M5 15 V22" stroke="#000" stroke-width="1.1"/></svg>
<div class="r" style="left:1323px;top:324px;width:17px;height:17px;background:#d2d2d2;box-sizing:border-box;border:1px solid #c4c4c4;"></div>
<svg style="left:1323px;top:324px" width="17" height="17" viewBox="0 0 17 17"><rect x="1" y="1" width="15" height="15" fill="#dedbd0"/><g transform="translate(8.5,7.5) scale(1.1)"><path d="M-1.8 3.5 H1.8 V6.6 H-1.8 Z" fill="#3a2a14"/><path d="M-2 3.8 H2" stroke="#8a6a2a" stroke-width=".7"/><path d="M0 -5 C3.4 -5 4.6 -2.6 4.6 -0.8 C4.6 1.4 2.6 2.4 2.2 4.2 H-2.2 C-2.6 2.4 -4.6 1.4 -4.6 -0.8 C-4.6 -2.6 -3.4 -5 0 -5 Z" fill="#f8d648"/><path d="M-1 -4.2 C-3 -3.6 -3.6 -1.8 -3.2 -0.4 C-2.4 -1.4 -1.8 -3 -1 -4.2 Z" fill="#fff6c0"/><path d="M1.2 -3.8 C3.6 -2.4 3.8 0.4 2 2.6 C2.4 0.6 2.6 -1.8 1.2 -3.8 Z" fill="#e0a820"/></g></svg>
<svg style="left:1312px;top:349px" width="12" height="12" viewBox="0 0 12 12"><defs><linearGradient id="gud" x1="0" y1="0" x2="0" y2="1"><stop offset="0" stop-color="#2c5cc0"/><stop offset="1" stop-color="#123a86"/></linearGradient></defs><rect x="0" y="0" width="12" height="12" rx="1" fill="url(#gud)"/><path d="M6 9.8 V3.4 M3 6 L6 2.8 L9 6" stroke="#fff" stroke-width="1.9" fill="none"/></svg><svg style="left:1330px;top:349px" width="12" height="12" viewBox="0 0 12 12"><defs><linearGradient id="gud" x1="0" y1="0" x2="0" y2="1"><stop offset="0" stop-color="#2c5cc0"/><stop offset="1" stop-color="#123a86"/></linearGradient></defs><rect x="0" y="0" width="12" height="12" rx="1" fill="url(#gud)"/><path d="M6 2.2 V8.6 M3 6 L6 9.2 L9 6" stroke="#fff" stroke-width="1.9" fill="none"/></svg>
<svg style="left:1094px;top:721px" width="272" height="26"><rect width="272" height="26" fill="#d6d6d6" filter="url(#nz)"/></svg>
<div class="r" style="left:1094px;top:721px;width:48px;height:25px;background:#f0f0f0;border-radius:0 0 6px 6px;"></div>
<div class="r" style="left:1143px;top:722px;width:49px;height:25px;background:#f4f4f4;border-radius:0 4px 6px 6px;box-sizing:border-box;border:1px solid #fff;box-shadow:1px 1px 0 #999;"></div>
<span class="t" style="left:1102px;top:727.00px;font-size:12px;font-weight:400;color:#000;font-style:normal;">Layers</span>
<span class="t" style="left:1151px;top:728.00px;font-size:12px;font-weight:400;color:#000;font-style:normal;">Add In</span>
<div class="r" style="left:1094px;top:746px;width:272px;height:1px;background:#8a8a8a;"></div>
<div class="r" style="left:1094px;top:747px;width:272px;height:21px;background:#f0f0f0;"></div>
<div class="r" style="left:1365px;top:43px;width:1px;height:705px;background:#b5b5b5;"></div>
<div class="r" style="left:1023px;top:751px;width:67px;height:17px;background:#f0f0f0;box-sizing:border-box;border-top:1px solid #a0a0a0;border-left:1px solid #a0a0a0;border-right:1px solid #fff;"></div>
<span class="t" style="left:1026px;top:754.00px;font-size:12px;font-weight:400;color:#000;font-style:normal;">X:</span>
<div class="r" style="left:1092px;top:751px;width:67px;height:17px;background:#f0f0f0;box-sizing:border-box;border-top:1px solid #a0a0a0;border-left:1px solid #a0a0a0;border-right:1px solid #fff;"></div>
<span class="t" style="left:1095px;top:754.00px;font-size:12px;font-weight:400;color:#000;font-style:normal;">Y:</span>
<div class="r" style="left:1161px;top:751px;width:61px;height:17px;background:#f0f0f0;box-sizing:border-box;border-top:1px solid #a0a0a0;border-left:1px solid #a0a0a0;border-right:1px solid #fff;"></div>
<span class="t" style="left:1164px;top:754.00px;font-size:12px;font-weight:400;color:#000;font-style:normal;">Z:</span>
<div class="r" style="left:1224px;top:751px;width:70px;height:17px;background:#f0f0f0;box-sizing:border-box;border-top:1px solid #a0a0a0;border-left:1px solid #a0a0a0;border-right:1px solid #fff;"></div>
<div class="r" style="left:1297px;top:751px;width:69px;height:17px;background:#f0f0f0;box-sizing:border-box;border-top:1px solid #a0a0a0;border-left:1px solid #a0a0a0;border-right:1px solid #fff;"></div>
</body></html>
